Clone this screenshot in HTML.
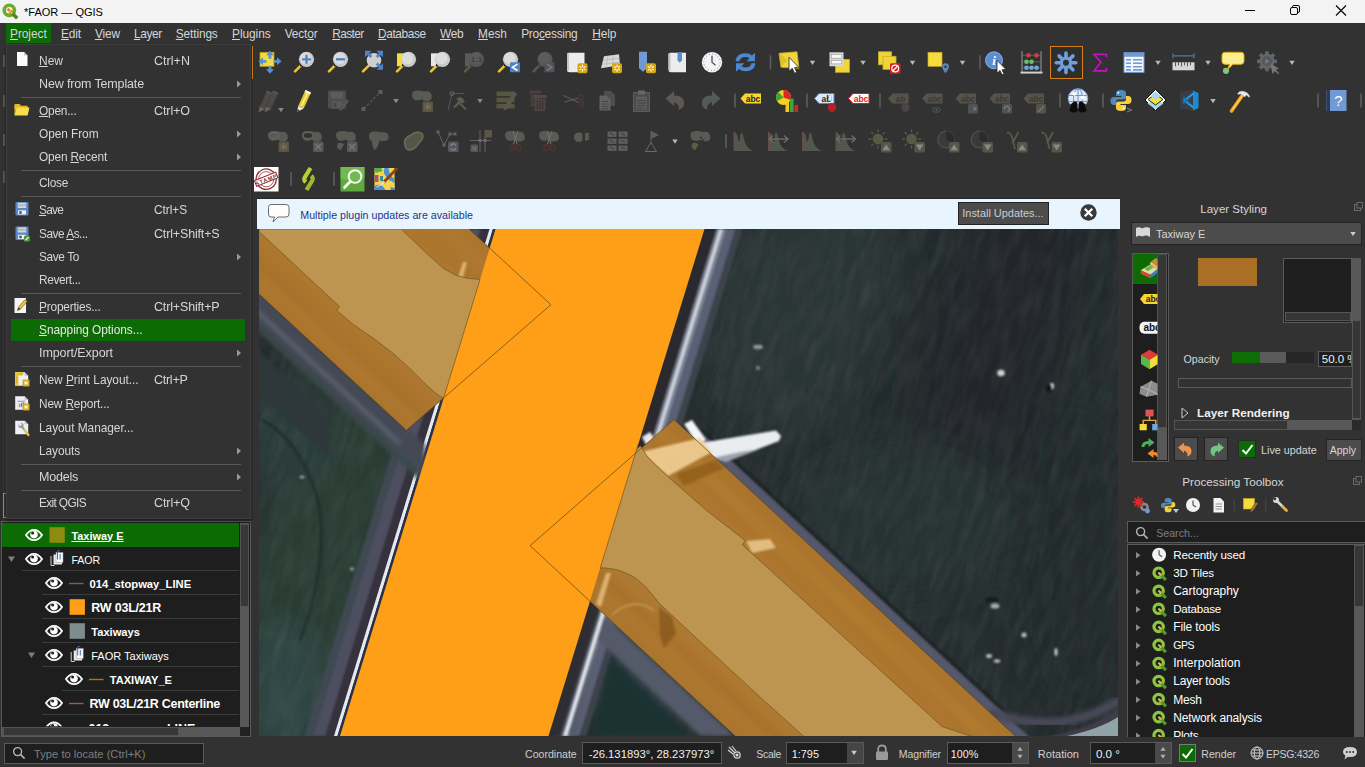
<!DOCTYPE html>
<html lang="en"><head><meta charset="utf-8"><title>*FAOR — QGIS</title>
<style>
html,body{margin:0;padding:0;}
body{width:1365px;height:767px;overflow:hidden;position:relative;background:#323232;font-family:"Liberation Sans",sans-serif;font-size:12px;}
.t{position:absolute;white-space:nowrap;display:block;}
.b{position:absolute;box-sizing:border-box;}
svg{position:absolute;overflow:visible;}
u{text-decoration:underline;text-underline-offset:1px;}
</style></head>
<body>
<!-- titlebar -->
<div class="b" style="left:0px;top:0px;width:1365px;height:23px;background:#f3f3f3;"></div>
<svg style="left:2px;top:3px" width="16" height="16" viewBox="0 0 16 16"><circle cx="7.3" cy="7.3" r="5.1" fill="none" stroke="#6cad2f" stroke-width="3.6"/><path d="M8 8 L15.2 15.2" stroke="#4d8a1c" stroke-width="3.4"/><path d="M6.2 6.4 L10.5 10.6" stroke="#f0b13a" stroke-width="2.6"/><path d="M5.6 5.8 L7.2 7.4" stroke="#ee7913" stroke-width="2.6"/></svg>
<span id="t1" class="t " style="left:24px;top:3.5px;font-size:11.02px;line-height:16px;color:#000;">*FAOR — QGIS</span>
<svg style="left:1240px;top:0" width="120" height="23" viewBox="1240 0 120 23" fill="none" stroke="#000" stroke-width="1"><path d="M1245 10.5 H1255"/><rect x="1290.5" y="7.5" width="7" height="7" rx="1.5"/><path d="M1292.5 7.5 V6.5 Q1292.5 5.5 1294 5.5 H1298 Q1299.5 5.5 1299.5 7 V11 Q1299.5 12.5 1298 12.5 H1297.5"/><path d="M1336 5.5 L1346 15.5 M1346 5.5 L1336 15.5" stroke-width="1.1"/></svg>
<div class="b" style="left:0px;top:23px;width:1365px;height:21px;background:#323232;"></div>
<div class="b" style="left:6px;top:23px;width:45px;height:20px;background:#0d6b05;"></div>
<span id="t2" class="t " style="left:10px;top:25.5px;font-size:11.88px;line-height:16px;color:#d6d6d6;letter-spacing:-0.039px;"><u>P</u>roject</span>
<span id="t3" class="t " style="left:61px;top:25.5px;font-size:11.88px;line-height:16px;color:#d6d6d6;letter-spacing:-0.117px;"><u>E</u>dit</span>
<span id="t4" class="t " style="left:94.9px;top:25.5px;font-size:11.88px;line-height:16px;color:#d6d6d6;letter-spacing:-0.112px;"><u>V</u>iew</span>
<span id="t5" class="t " style="left:133.9px;top:25.5px;font-size:11.88px;line-height:16px;color:#d6d6d6;letter-spacing:-0.343px;"><u>L</u>ayer</span>
<span id="t6" class="t " style="left:175.8px;top:25.5px;font-size:11.88px;line-height:16px;color:#d6d6d6;letter-spacing:-0.129px;"><u>S</u>ettings</span>
<span id="t7" class="t " style="left:232px;top:25.5px;font-size:11.88px;line-height:16px;color:#d6d6d6;letter-spacing:-0.038px;"><u>P</u>lugins</span>
<span id="t8" class="t " style="left:284.7px;top:25.5px;font-size:11.88px;line-height:16px;color:#d6d6d6;letter-spacing:-0.130px;">Vect<u>o</u>r</span>
<span id="t9" class="t " style="left:332.2px;top:25.5px;font-size:11.88px;line-height:16px;color:#d6d6d6;letter-spacing:-0.581px;"><u>R</u>aster</span>
<span id="t10" class="t " style="left:378px;top:25.5px;font-size:11.88px;line-height:16px;color:#d6d6d6;letter-spacing:-0.380px;"><u>D</u>atabase</span>
<span id="t11" class="t " style="left:440px;top:25.5px;font-size:11.88px;line-height:16px;color:#d6d6d6;letter-spacing:-0.303px;"><u>W</u>eb</span>
<span id="t12" class="t " style="left:478.1px;top:25.5px;font-size:11.88px;line-height:16px;color:#d6d6d6;letter-spacing:-0.087px;"><u>M</u>esh</span>
<span id="t13" class="t " style="left:521.2px;top:25.5px;font-size:11.88px;line-height:16px;color:#d6d6d6;letter-spacing:-0.255px;">Pro<u>c</u>essing</span>
<span id="t14" class="t " style="left:592.2px;top:25.5px;font-size:11.88px;line-height:16px;color:#d6d6d6;letter-spacing:-0.058px;"><u>H</u>elp</span>
<!-- toolbars -->
<svg style="left:0;top:0" width="1365" height="200" viewBox="0 0 1365 200"><g transform="translate(258,50.3)"><rect x="2" y="2" width="14" height="14" fill="#f5dc3c" stroke="#b99a1c" stroke-width=".8"/><g fill="#5b8fd1"><path d="M12 0.5 l4 4.5 h-2.6 v3.4 h-2.8 v-3.4 h-2.6z"/><path d="M12 23.5 l4 -4.5 h-2.6 v-3.4 h-2.8 v3.4 h-2.6z"/><path d="M0.5 11 l4.5 -4 v2.6 h3.4 v2.8 h-3.4 v2.6z"/><path d="M23.5 11 l-4.5 -4 v2.6 h-3.4 v2.8 h3.4 v2.6z"/></g></g><g transform="translate(292,50.3)"><path d="M3 21 L9.5 14.5" stroke="#e8c337" stroke-width="2.6" stroke-linecap="round"/><circle cx="9.3" cy="14.7" r="1.5" fill="#1d1d1d"/><circle cx="14.5" cy="9" r="7.6" fill="#c9c9c9"/><circle cx="13.6" cy="8" r="5.8" fill="#e4e4e4" opacity=".7"/><path d="M14.5 4.5 v9 M10 9 h9" stroke="#4f83c6" stroke-width="2.3"/></g><g transform="translate(326,50.3)"><path d="M3 21 L9.5 14.5" stroke="#e8c337" stroke-width="2.6" stroke-linecap="round"/><circle cx="9.3" cy="14.7" r="1.5" fill="#1d1d1d"/><circle cx="14.5" cy="9" r="7.6" fill="#c9c9c9"/><circle cx="13.6" cy="8" r="5.8" fill="#e4e4e4" opacity=".7"/><path d="M10 9 h9" stroke="#4f83c6" stroke-width="2.3"/></g><g transform="translate(360,50.3)"><path d="M3 21 L9 15" stroke="#e8c337" stroke-width="2.6" stroke-linecap="round"/><circle cx="14" cy="10" r="7.3" fill="#cfcfcf"/><g fill="#4f83c6"><path d="M5 0.5 h6.5 l-2.2 2.2 3 3 -2 2 -3 -3 -2.3 2.3z"/><path d="M23 0.5 v6.5 l-2.2 -2.2 -3 3 -2 -2 3 -3 -2.3 -2.3z"/><path d="M23 19.5 h-6.5 l2.2 -2.2 -3 -3 2 -2 3 3 2.3 -2.3z"/><path d="M5 19.5 v-6.5 l2.2 2.2 3 -3 2 2 -3 3 2.3 2.3z" opacity=".0"/></g></g><g transform="translate(394,50.3)"><rect x="3" y="3" width="9" height="13" fill="#f5dc3c"/><path d="M3 21 L9.5 14.5" stroke="#e8c337" stroke-width="2.6" stroke-linecap="round"/><circle cx="9.3" cy="14.7" r="1.5" fill="#1d1d1d"/><circle cx="14.5" cy="9" r="7.6" fill="#c9c9c9"/><circle cx="13.6" cy="8" r="5.8" fill="#e4e4e4" opacity=".7"/></g><g transform="translate(428,50.3)"><rect x="3" y="3" width="9" height="13" fill="#e6e6e6"/><path d="M3 21 L9.5 14.5" stroke="#e8c337" stroke-width="2.6" stroke-linecap="round"/><circle cx="9.3" cy="14.7" r="1.5" fill="#1d1d1d"/><circle cx="14.5" cy="9" r="7.6" fill="#c9c9c9"/><circle cx="13.6" cy="8" r="5.8" fill="#e4e4e4" opacity=".7"/></g><g transform="translate(462,50.3)"><rect x="3" y="3" width="9" height="13" fill="#5a5a5a"/><path d="M3 21 L9.5 14.5" stroke="#5d5a48" stroke-width="2.6" stroke-linecap="round"/><circle cx="9.3" cy="14.7" r="1.5" fill="#444"/><circle cx="14.5" cy="9" r="7.6" fill="#555"/><circle cx="13.6" cy="8" r="5.8" fill="#5f5f5f" opacity=".7"/><text x="14.5" y="12" font-size="8" font-weight="700" fill="#3c3c3c" text-anchor="middle" font-family="Liberation Sans,sans-serif">1:1</text></g><g transform="translate(496,50.3)"><path d="M3 21 L9.5 14.5" stroke="#e8c337" stroke-width="2.6" stroke-linecap="round"/><circle cx="9.3" cy="14.7" r="1.5" fill="#1d1d1d"/><circle cx="14.5" cy="9" r="7.6" fill="#c9c9c9"/><circle cx="13.6" cy="8" r="5.8" fill="#e4e4e4" opacity=".7"/><rect x="14" y="12" width="10" height="10" rx="1" fill="#4f83c6"/><path d="M21.5 13.8 l-5 3.2 5 3.2" stroke="#fff" stroke-width="1.6" fill="none"/></g><g transform="translate(530.5,50.3)"><path d="M3 21 L9.5 14.5" stroke="#5d5a48" stroke-width="2.6" stroke-linecap="round"/><circle cx="9.3" cy="14.7" r="1.5" fill="#444"/><circle cx="14.5" cy="9" r="7.6" fill="#555"/><circle cx="13.6" cy="8" r="5.8" fill="#5f5f5f" opacity=".7"/><rect x="14" y="12" width="10" height="10" rx="1" fill="#50545a"/><path d="M16.5 13.8 l5 3.2 -5 3.2" stroke="#777" stroke-width="1.6" fill="none"/></g><g transform="translate(564.5,50.3)"><path d="M4 2.5 H20 V22 H5 Q2.5 22 2.5 19.5 V4 Q2.5 2.5 4 2.5Z" fill="#ececec"/><path d="M2.5 4 Q2.5 2.5 4.5 2.5 V19.5 Q4.5 22 2.5 19.5Z" fill="#c4c4c4"/><rect x="13" y="13" width="10" height="10" rx="1.8" fill="#d4a514"/><g stroke="#fff" stroke-width="1.1"><path d="M18 14.5 v7 M15 16.2 l6 3.6 M21 16.2 l-6 3.6"/></g><circle cx="18" cy="18" r="1.3" fill="#d4a514"/></g><g transform="translate(599,50.3)"><path d="M5 6 L20 4 L21 15 L2 18Z" fill="#d9d9d9"/><path d="M9 5.5 L7 17.3 M14 4.8 L13.5 16.2 M4 10 L20.5 8 M3 14 L21 12" stroke="#b0b0b0" stroke-width=".7"/><rect x="13" y="13" width="10" height="10" rx="1.8" fill="#d4a514"/><g stroke="#fff" stroke-width="1.1"><path d="M18 14.5 v7 M15 16.2 l6 3.6 M21 16.2 l-6 3.6"/></g><circle cx="18" cy="18" r="1.3" fill="#d4a514"/></g><g transform="translate(634,50.3)"><path d="M5 1.5 H13 V18 L9 21.5 L5 18Z" fill="#6f9ad3"/><rect x="12" y="13" width="10" height="10" rx="1.8" fill="#d4a514"/><g stroke="#fff" stroke-width="1.1"><path d="M17 14.5 v7 M14 16.2 l6 3.6 M20 16.2 l-6 3.6"/></g><circle cx="17" cy="18" r="1.3" fill="#d4a514"/></g><g transform="translate(666,50.3)"><path d="M4 2.5 H20 V22 H5 Q2.5 22 2.5 19.5 V4 Q2.5 2.5 4 2.5Z" fill="#ececec"/><path d="M2.5 4 Q2.5 2.5 4.5 2.5 V19.5 Q4.5 22 2.5 19.5Z" fill="#c4c4c4"/><path d="M11.5 2 H16 V10 L13.75 12.5 L11.5 10Z" fill="#5d8ccb"/></g><g transform="translate(700,50.3)"><circle cx="12" cy="12" r="10.2" fill="#f4f4f4"/><circle cx="12" cy="12" r="8.2" fill="none" stroke="#5d8ccb" stroke-width="1" stroke-dasharray="1 2.2"/><path d="M12 5.5 V12 L15.5 15" stroke="#5a5a5a" stroke-width="1.4" fill="none"/></g><g transform="translate(733.5,50.3)"><g fill="#4c88d0"><path d="M2 11 Q3 3 12 3 Q16 3 18.5 5.2 L21.5 2.5 V11 H13.2 L16 8 Q14.2 6.6 12 6.7 Q6.8 6.8 6 11Z"/><path d="M22 13 Q21 21 12 21 Q8 21 5.5 18.8 L2.5 21.5 V13 H10.8 L8 16 Q9.8 17.4 12 17.3 Q17.2 17.2 18 13Z"/></g></g><rect x="769.7" y="55.3" width="1.6" height="14" fill="#5c5c5c"/><g transform="translate(777,50.3)"><path d="M2 3 L20 1.5 L22 18 L4 17Z" fill="#f0d53a" stroke="#c9ad22" stroke-width=".8"/><path d="M3 3 L10 10 L4 16.5" fill="#dcc02c"/><path d="M12 7 L12 21 L15.3 18 L17.6 23 L19.8 22 L17.5 17.2 L21.8 17Z" fill="#fff" stroke="#222" stroke-width=".8"/></g><path d="M809.8 60.8 h5.4 l-2.7 4.2z" fill="#b8b8b8"/><g transform="translate(827.5,50.3)"><rect x="8" y="9" width="14" height="13" fill="#f0d53a" stroke="#c9ad22" stroke-width=".7"/><rect x="2" y="2" width="14" height="14" fill="#d7d7d7"/><rect x="3.8" y="4.2" width="10.4" height="3.6" fill="#fafafa" stroke="#8a8a8a" stroke-width=".5"/><rect x="3.8" y="10" width="10.4" height="3.6" fill="#fafafa" stroke="#8a8a8a" stroke-width=".5"/></g><path d="M860.3 60.8 h5.4 l-2.7 4.2z" fill="#b8b8b8"/><g transform="translate(877,50.3)"><rect x="1.5" y="1.5" width="13" height="13" fill="#f0d53a" stroke="#c9ad22" stroke-width=".8"/><rect x="6" y="6" width="13" height="13" fill="#f0d53a" stroke="#c9ad22" stroke-width=".8"/><rect x="13" y="13" width="10.5" height="10.5" rx="1.5" fill="#d42020"/><circle cx="18.2" cy="18.2" r="3.4" fill="none" stroke="#fff" stroke-width="1.3"/><path d="M16 20.5 L20.5 16" stroke="#fff" stroke-width="1.3"/></g><path d="M909.8 60.8 h5.4 l-2.7 4.2z" fill="#b8b8b8"/><g transform="translate(925.5,50.3)"><rect x="2.5" y="2" width="14" height="14" fill="#f5dc3c" stroke="#c9ad22" stroke-width=".7"/><path d="M20 23 Q16.6 18.5 16.6 16.4 A3.4 3.4 0 0 1 23.4 16.4 Q23.4 18.5 20 23Z" fill="#5c86b8"/><circle cx="20" cy="16.4" r="1.2" fill="#323232"/></g><path d="M959.8 60.8 h5.4 l-2.7 4.2z" fill="#b8b8b8"/><rect x="979.2" y="55.3" width="1.6" height="14" fill="#5c5c5c"/><g transform="translate(984,50.3)"><circle cx="10" cy="10" r="8.5" fill="#5b8fd1"/><circle cx="10" cy="10" r="8.5" fill="none" stroke="#86aee0" stroke-width="1"/><text x="10" y="15" font-size="13" font-weight="700" font-style="italic" fill="#fff" text-anchor="middle" font-family="Liberation Serif,serif">i</text><path d="M13 10 L13 23 L16 20.3 L18 24.5 L20 23.6 L18 19.5 L22 19.2Z" fill="#fff" stroke="#222" stroke-width=".8"/></g><g transform="translate(1019.5,50.3)"><path d="M2.5 1 V22 M21.5 1 V22" stroke="#8a8a8a" stroke-width="1.2"/><path d="M1 22.3 H23" stroke="#cfcfcf" stroke-width="2"/><path d="M3 5 H21 M3 11.5 H21 M3 17.5 H21" stroke="#777" stroke-width=".6"/><g fill="#d83a3a"><circle cx="9" cy="5" r="2.3"/><circle cx="17" cy="5" r="2.3"/></g><g fill="#6cc06a"><circle cx="7" cy="11.5" r="2.3"/><circle cx="12" cy="11.5" r="2.3"/></g><g fill="#6aa7dc"><circle cx="7" cy="17.5" r="2.3"/><circle cx="12" cy="17.5" r="2.3"/><circle cx="17" cy="17.5" r="2.3"/></g></g><rect x="1050.5" y="46.5" width="32" height="32" fill="#2e2e2e" stroke="#d7801a" stroke-width="1"/><g transform="translate(1054,50.8)"><path d="M12 12 L12 2.2" stroke="#6f9fdc" stroke-width="3.6" stroke-linecap="round" transform="rotate(0 12 12)"/><path d="M12 12 L12 2.2" stroke="#6f9fdc" stroke-width="3.6" stroke-linecap="round" transform="rotate(45 12 12)"/><path d="M12 12 L12 2.2" stroke="#6f9fdc" stroke-width="3.6" stroke-linecap="round" transform="rotate(90 12 12)"/><path d="M12 12 L12 2.2" stroke="#6f9fdc" stroke-width="3.6" stroke-linecap="round" transform="rotate(135 12 12)"/><path d="M12 12 L12 2.2" stroke="#6f9fdc" stroke-width="3.6" stroke-linecap="round" transform="rotate(180 12 12)"/><path d="M12 12 L12 2.2" stroke="#6f9fdc" stroke-width="3.6" stroke-linecap="round" transform="rotate(225 12 12)"/><path d="M12 12 L12 2.2" stroke="#6f9fdc" stroke-width="3.6" stroke-linecap="round" transform="rotate(270 12 12)"/><path d="M12 12 L12 2.2" stroke="#6f9fdc" stroke-width="3.6" stroke-linecap="round" transform="rotate(315 12 12)"/><circle cx="12" cy="12" r="6.2" fill="#6f9fdc"/><circle cx="12" cy="12" r="3" fill="#2e2e2e"/></g><g transform="translate(1088,50.3)"><path d="M18.5 7 V4 H6 L13 12 L6 20.5 H18.5 V17.5" fill="none" stroke="#c013c0" stroke-width="1.7"/></g><g transform="translate(1122,50.3)"><rect x="2" y="2.5" width="20" height="19.5" fill="#f2f6fc" stroke="#6f9ad3" stroke-width="1"/><rect x="2" y="2.5" width="20" height="4" fill="#6f9ad3"/><g stroke="#6f9ad3" stroke-width="1.6"><path d="M4 9.5 h5 M11 9.5 h9 M4 13 h5 M11 13 h9 M4 16.5 h5 M11 16.5 h9 M4 19.6 h5 M11 19.6 h9"/></g></g><path d="M1155.3 60.8 h5.4 l-2.7 4.2z" fill="#b8b8b8"/><g transform="translate(1171.5,50.3)"><path d="M1.5 5.5 H22.5 M1.5 3 V8 M22.5 3 V8" stroke="#4a78b8" stroke-width="1.2"/><rect x="1" y="12" width="22" height="8" fill="#d6d6d6"/><path d="M4 12 v4 M7 12 v3 M10 12 v4 M13 12 v3 M16 12 v4 M19 12 v3" stroke="#555" stroke-width="1"/></g><path d="M1205.3 60.8 h5.4 l-2.7 4.2z" fill="#b8b8b8"/><g transform="translate(1221,50.3)"><circle cx="5" cy="20.5" r="3.1" fill="#7fc47f"/><path d="M4 2 H20 Q23 2 23 5 V11 Q23 14 20 14 H12 L6.5 19.5 L8.5 14 H4 Q1 14 1 11 V5 Q1 2 4 2Z" fill="#fbee8e" stroke="#d9a91a" stroke-width="1"/></g><g transform="translate(1255,50.3)"><rect x="10.2" y="1" width="3.6" height="4" fill="#666" transform="rotate(0 12 11)"/><rect x="10.2" y="1" width="3.6" height="4" fill="#666" transform="rotate(45 12 11)"/><rect x="10.2" y="1" width="3.6" height="4" fill="#666" transform="rotate(90 12 11)"/><rect x="10.2" y="1" width="3.6" height="4" fill="#666" transform="rotate(135 12 11)"/><rect x="10.2" y="1" width="3.6" height="4" fill="#666" transform="rotate(180 12 11)"/><rect x="10.2" y="1" width="3.6" height="4" fill="#666" transform="rotate(225 12 11)"/><rect x="10.2" y="1" width="3.6" height="4" fill="#666" transform="rotate(270 12 11)"/><rect x="10.2" y="1" width="3.6" height="4" fill="#666" transform="rotate(315 12 11)"/><circle cx="12" cy="11" r="7.6" fill="#666"/><circle cx="12" cy="11" r="5" fill="#505860"/><path d="M10.3 8.2 L15 11 L10.3 13.8Z" fill="#777"/><path d="M15.5 14 L17.5 24 L19.6 20.6 L23.5 24 L24 23 L20.8 19.3 L24 18Z" fill="#777"/></g><path d="M1289.3 60.8 h5.4 l-2.7 4.2z" fill="#b8b8b8"/><g transform="translate(257,88.5)"><g transform="translate(-3.5,.5)"><path d="M6.2 17.5 L13.5 1.5 L19 4 L11.7 20Z" fill="#4a4643"/><path d="M9.6 17.2 L16.3 2.9" stroke="#514d49" stroke-width="1.4"/><path d="M6.2 17.5 L11.7 20 L5 23.5Z" fill="#656565"/><path d="M13.5 1.5 L19 4 L18.1 6 L12.6 3.5Z" fill="#555"/></g><g transform="translate(2.5,.5)"><path d="M6.2 17.5 L13.5 1.5 L19 4 L11.7 20Z" fill="#4a4643"/><path d="M9.6 17.2 L16.3 2.9" stroke="#514d49" stroke-width="1.4"/><path d="M6.2 17.5 L11.7 20 L5 23.5Z" fill="#656565"/><path d="M13.5 1.5 L19 4 L18.1 6 L12.6 3.5Z" fill="#555"/></g></g><path d="M278.3 108 h5.4 l-2.7 4.2z" fill="#8a8a8a"/><g transform="translate(292,88.5)"><path d="M6.2 17.5 L13.5 1.5 L19 4 L11.7 20Z" fill="#e6cb2e"/><path d="M9.6 17.2 L16.3 2.9" stroke="#fdf39a" stroke-width="1.4"/><path d="M6.2 17.5 L11.7 20 L5 23.5Z" fill="#e9e9e9"/><path d="M13.5 1.5 L19 4 L18.1 6 L12.6 3.5Z" fill="#f4f4f4"/><path d="M5 23.5 L5.7 20.6 L7.7 21.9Z" fill="#333"/></g><g transform="translate(326,88.5)"><rect x="2" y="2" width="18" height="18" rx="1" fill="#4e4e4e"/><rect x="5" y="3.5" width="12" height="6.5" fill="#5c5c5c"/><rect x="6" y="13" width="10" height="7" fill="#5a5a5a"/><rect x="7.5" y="14.5" width="3" height="4" fill="#444"/><path d="M13 22.5 L14 18.5 L20 10.5 L23 12.8 L17 20.8Z" fill="#59544e"/></g><g transform="translate(360,88.5)"><path d="M4 20 L20 4" stroke="#5d5d5d" stroke-width="1.1" stroke-dasharray="2.5 2"/><rect x="1.5" y="18.5" width="4" height="4" fill="#5d5d5d"/><rect x="18.5" y="1.5" width="4" height="4" fill="#5d5d5d"/></g><path d="M393.3 99 h5.4 l-2.7 4.2z" fill="#8a8a8a"/><g transform="translate(410,88.5)"><path d="M2 6 Q2 2 8 2 Q12 2 14 3 Q20 1.5 21.5 6 Q23 12 17.5 12.5 Q13 12.5 12 10.5 Q9 12.5 5 11.5 Q2 10 2 6Z" fill="#5a5a55"/><rect x="12.5" y="13" width="10.5" height="10.5" rx="1.5" fill="#5b5743"/><g stroke="#7a7766" stroke-width="1"><path d="M17.7 14.5 v7.5 M14.5 16.4 l6.5 3.7 M21 16.4 l-6.5 3.7"/></g></g><g transform="translate(445,88.5)"><path d="M3 22 L7 5 H19" stroke="#5a5a5a" stroke-width=".9" fill="none"/><circle cx="7" cy="5" r="2" fill="none" stroke="#6a6a6a" stroke-width="1"/><path d="M9 19 L18 10" stroke="#5d5a4a" stroke-width="2.4"/><path d="M11 10.5 L15 8 L20 13 L17.5 15Z" fill="#5a5a5a"/><path d="M13 13 L21 21" stroke="#5d5a4a" stroke-width="2.2"/></g><path d="M477.3 99 h5.4 l-2.7 4.2z" fill="#8a8a8a"/><g transform="translate(494.5,88.5)"><rect x="2" y="3" width="18" height="4.6" fill="#57573f"/><rect x="2" y="9.2" width="18" height="4.6" fill="#57573f"/><rect x="2" y="15.4" width="18" height="4.6" fill="#57573f"/><path d="M9 22.5 L10.2 17.5 L19 3 L22.5 5.2 L14 19.6Z" fill="#5b5651"/></g><g transform="translate(527.5,88.5)"><rect x="2" y="2" width="12" height="3" fill="#4a403f"/><rect x="3" y="6" width="10" height="12" fill="#463d3c"/><rect x="6" y="6.5" width="13" height="3" fill="#544847"/><rect x="7" y="10.5" width="11" height="12" fill="#4f4443"/><path d="M10 12 v9 M12.7 12 v9 M15.4 12 v9" stroke="#3a3232" stroke-width="1.2"/></g><g transform="translate(561.5,88.5)"><path d="M2 7 L17 14 M3 13.5 L17 9.5" stroke="#5b5b5b" stroke-width="1.3"/><circle cx="19.5" cy="9" r="2.6" fill="none" stroke="#5e3434" stroke-width="1"/><circle cx="19.5" cy="15.5" r="2.6" fill="none" stroke="#5e3434" stroke-width="1"/></g><g transform="translate(596,88.5)"><path d="M8 2.5 h7 l4 4 v11 h-11z" fill="#4d4d4d"/><path d="M3.5 7 h7 l4 4 v11 h-11z" fill="#626262"/><path d="M5.5 13 h7 M5.5 15.5 h7 M5.5 18 h7 M5.5 20.3 h7" stroke="#444" stroke-width=".9"/></g><g transform="translate(630,88.5)"><rect x="3.5" y="4" width="16" height="19" fill="#4b4b4b" stroke="#5e5e5e" stroke-width="1"/><rect x="8" y="2" width="7" height="4" fill="#666"/><rect x="6" y="8" width="11" height="13" fill="#5c5c5c"/><path d="M7.5 12 h8 M7.5 14.5 h8 M7.5 17 h8 M7.5 19.3 h6" stroke="#444" stroke-width=".9"/></g><g transform="translate(664,88.5)"><path d="M1.5 10 L10 2.5 V7 Q21 7 20 16 Q19.5 20 14 21.5 Q17 17 10 13.5 V17.5Z" fill="#5c5853"/></g><g transform="translate(698,88.5)"><path d="M22.5 10 L14 2.5 V7 Q3 7 4 16 Q4.5 20 10 21.5 Q7 17 14 13.5 V17.5Z" fill="#535a57"/></g><rect x="734.2" y="93.5" width="1.6" height="14" fill="#5c5c5c"/><g transform="translate(740,89.5)"><path d="M0.5 9 L5 4 H21 V14 H5Z" fill="#f5d730"/><text x="13" y="12.4" font-size="8.5" font-weight="700" fill="#222" text-anchor="middle" font-family="Liberation Sans,sans-serif">abc</text></g><g transform="translate(775,88.5)"><circle cx="8.5" cy="9" r="7.5" fill="#f5d21f"/><path d="M8.5 9 L8.5 1.5 A7.5 7.5 0 0 1 15.6 11.4Z" fill="#e0262a"/><path d="M8.5 9 L2 12.8 A7.5 7.5 0 0 1 3.5 3.5Z" fill="#3ea53c"/><rect x="10.5" y="14" width="3.6" height="9.5" fill="#f5c81f"/><rect x="15" y="10" width="3.6" height="13.5" fill="#3ea53c"/><rect x="19.5" y="16.5" width="3.6" height="7" fill="#d7262a"/></g><rect x="806.2" y="93.5" width="1.6" height="14" fill="#5c5c5c"/><g transform="translate(814,89.5)"><path d="M0.5 9 L5 4 H20 V14 H5Z" fill="#dbe9fb" stroke="#4f83c6" stroke-width="1"/><text x="12.5" y="12.4" font-size="8.5" font-weight="700" fill="#222" text-anchor="middle" font-family="Liberation Sans,sans-serif">ab</text><rect x="15" y="5.5" width="2.2" height="6" rx="1" fill="#fff" stroke="#777" stroke-width=".4"/><circle cx="18" cy="18" r="4.4" fill="#b32027"/></g><g transform="translate(848,89.5)"><path d="M0.5 9 L5 4 H21 V14 H5Z" fill="#fff" stroke="#e0161c" stroke-width="1"/><text x="13" y="12.4" font-size="8.5" font-weight="700" fill="#e0161c" text-anchor="middle" font-family="Liberation Sans,sans-serif">abc</text></g><rect x="879.2" y="93.5" width="1.6" height="14" fill="#5c5c5c"/><g transform="translate(887.5,89.5)"><path d="M0.5 9 L5 4 H21 V14 H5Z" fill="#56534a"/><text x="13" y="12.4" font-size="8.5" font-weight="700" fill="#3b3a36" text-anchor="middle" font-family="Liberation Sans,sans-serif">ab</text><circle cx="18" cy="18" r="4.2" fill="#4d4446"/></g><g transform="translate(921.5,89.5)"><path d="M0.5 9 L5 4 H21 V14 H5Z" fill="#56534a"/><text x="13" y="12.4" font-size="8.5" font-weight="700" fill="#3b3a36" text-anchor="middle" font-family="Liberation Sans,sans-serif">abc</text><ellipse cx="15" cy="20.5" rx="4" ry="2.3" fill="none" stroke="#55575f" stroke-width="1"/><circle cx="15" cy="20.5" r="1.2" fill="#55575f"/></g><g transform="translate(955,89.5)"><path d="M0.5 9 L5 4 H21 V14 H5Z" fill="#56534a"/><text x="13" y="12.4" font-size="8.5" font-weight="700" fill="#3b3a36" text-anchor="middle" font-family="Liberation Sans,sans-serif">abc</text><rect x="13" y="14.5" width="10" height="9.5" rx="1.5" fill="#4f5257"/><path d="M14.5 19.2 h4 v-2.7 l3.6 2.7 -3.6 2.7 v-2.7z" fill="#73767a"/></g><g transform="translate(989,89.5)"><path d="M0.5 9 L5 4 H21 V14 H5Z" fill="#56534a"/><text x="13" y="12.4" font-size="8.5" font-weight="700" fill="#3b3a36" text-anchor="middle" font-family="Liberation Sans,sans-serif">abc</text><rect x="13" y="14.5" width="10" height="9.5" rx="1.5" fill="#4f5257"/><path d="M15.5 20 A2.6 2.6 0 1 1 18.6 22" stroke="#777a7e" stroke-width="1.2" fill="none"/></g><g transform="translate(1023,89.5)"><path d="M0.5 9 L5 4 H21 V14 H5Z" fill="#56534a"/><text x="13" y="12.4" font-size="8.5" font-weight="700" fill="#3b3a36" text-anchor="middle" font-family="Liberation Sans,sans-serif">abc</text><rect x="13" y="14.5" width="10" height="9.5" rx="1.5" fill="#55534a"/><path d="M15 22.5 L21 16.5" stroke="#77756b" stroke-width="1.6"/></g><rect x="1059.2" y="93.5" width="1.6" height="14" fill="#5c5c5c"/><g transform="translate(1066,88.5)"><circle cx="12" cy="10" r="9.8" fill="#dfe9f7" stroke="#7fa6d8" stroke-width="1"/><g fill="none" stroke="#5d8ccb" stroke-width=".9"><ellipse cx="12" cy="10" rx="4.5" ry="9.6"/><path d="M2.5 7 H21.5 M2.5 13 H21.5 M12 .5 V19.5"/></g><path d="M6 5 l3 -1.5 2 2 -3 2z M14 8 l4 -1 1 3 -3 1z" fill="#fff"/><g fill="#0c0c0c"><path d="M4.5 16 L8 13 H10.5 L11.5 16 V22 H4.5Z"/><path d="M19.5 16 L16 13 H13.5 L12.5 16 V22 H19.5Z"/><ellipse cx="7.5" cy="21.5" rx="4" ry="2.4"/><ellipse cx="16.5" cy="21.5" rx="4" ry="2.4"/></g></g><rect x="1102.2" y="93.5" width="1.6" height="14" fill="#5c5c5c"/><g transform="translate(1109,88.5)"><path d="M11.8 1.5 Q7 1.5 7 4.5 V7.5 H12.5 V8.5 H5 Q1.5 8.5 1.5 12.5 Q1.5 16.5 5 16.5 H7 V13.5 Q7 11 10 11 H14.5 Q17 11 17 8.5 V4.5 Q17 1.5 11.8 1.5Z" fill="#4b8bbe"/><path d="M12.2 22.5 Q17 22.5 17 19.5 V16.5 H11.5 V15.5 H19 Q22.5 15.5 22.5 11.5 Q22.5 7.5 19 7.5 H17 V10.5 Q17 13 14 13 H9.5 Q7 13 7 15.5 V19.5 Q7 22.5 12.2 22.5Z" fill="#f6cf3f"/><circle cx="9.3" cy="4.3" r="1" fill="#fff"/><circle cx="14.7" cy="19.7" r="1" fill="#fff"/><path d="M18 19.5 L22.5 21.5 L18 23.5" fill="none" stroke="#777" stroke-width="1.2"/></g><g transform="translate(1143.5,88.5)"><path d="M12 1 L22.5 11.5 L12 22 L1.5 11.5Z" fill="#fff" stroke="#111" stroke-width="1"/><path d="M12 10 L20 15 L12 21 L4 15Z" fill="#a9d7ef"/><path d="M12 5.5 L19.5 11 L12 16.5 L4.5 11Z" fill="#f3e03c" stroke="#111" stroke-width=".9"/><path d="M12 2.8 L17.2 7.5 L12 11.2 L6.8 7.5Z" fill="#a9d7ef"/></g><g transform="translate(1177,88.5)"><path d="M3 3 L17 1.5 V22.5 L3 20Z" fill="#3a3d44"/><path d="M16 2 L21.5 4.5 V19.5 L16 22Z" fill="#1f8ad2"/><path d="M16 2 L6 11 L3.8 9.3 L2.5 10 L16 22 V17 L9.5 12 L16 7Z" fill="#2d9cdf" opacity=".0"/><path d="M16.5 5 L7.5 12 L16.5 19" fill="none" stroke="#2d9cdf" stroke-width="2.2"/><path d="M6 9 L13 15 M6 15 L13 9" stroke="#1473b5" stroke-width="1.8"/></g><path d="M1210.3 99 h5.4 l-2.7 4.2z" fill="#b8b8b8"/><g transform="translate(1227,88.5)"><path d="M4.5 22.5 L16 6" stroke="#f0a81c" stroke-width="3.6" stroke-linecap="round"/><path d="M5.5 21 L16 6" stroke="#ffd36a" stroke-width="1.1"/><path d="M10.5 5 Q14 .5 20.5 4.5 L23 8 L21.8 8.8 L19.5 6.6 L17.8 8.6 L13.8 5.6 Q12 5.5 11.2 6Z" fill="#e9e9e9" stroke="#9a9a9a" stroke-width=".5"/></g><rect x="1317.2" y="93.5" width="1.6" height="14" fill="#5c5c5c"/><g transform="translate(1324.5,88.5)"><rect x="2" y="1.5" width="20" height="21" fill="#6f9ad3"/><rect x="2" y="1.5" width="3.5" height="21" fill="#2e3a55"/><text x="13.8" y="17.5" font-size="15" fill="#fff" text-anchor="middle" font-family="Liberation Sans,sans-serif">?</text></g><rect x="1360.2" y="93.5" width="1.6" height="14" fill="#5c5c5c"/><g transform="translate(266,129)"><path d="M2 6 Q2 2 8 2 Q12 2 14 3 Q20 1.5 21.5 6 Q23 12 17.5 12.5 Q13 12.5 12 10.5 Q9 12.5 5 11.5 Q2 10 2 6Z" fill="#5a5a55"/><ellipse cx="8" cy="6.5" rx="4.6" ry="3" fill="none" stroke="#6c6c6c" stroke-width=".8"/><rect x="12.5" y="12.5" width="10.5" height="10.5" rx="1.5" fill="#5b5743"/><g stroke="#7a7766" stroke-width="1"><path d="M17.7 14 v7.5 M14.5 15.9 l6.5 3.7 M21 15.9 l-6.5 3.7"/></g></g><g transform="translate(300,129)"><path d="M2 6 Q2 2 8 2 Q12 2 14 3 Q20 1.5 21.5 6 Q23 12 17.5 12.5 Q13 12.5 12 10.5 Q9 12.5 5 11.5 Q2 10 2 6Z" fill="#5a5a55"/><ellipse cx="8" cy="6.5" rx="4.6" ry="3" fill="#323232" stroke="#6c6c6c" stroke-width=".8"/><rect x="13" y="12.5" width="10.5" height="10.5" rx="1.5" fill="#585858"/><path d="M15.5 15 l5.5 5.5 M21 15 l-5.5 5.5" stroke="#787878" stroke-width="1.4"/></g><g transform="translate(334,129)"><path d="M2 6 Q2 2 8 2 Q12 2 14 3 Q20 1.5 21.5 6 Q23 12 17.5 12.5 Q13 12.5 12 10.5 Q9 12.5 5 11.5 Q2 10 2 6Z" fill="#5a5a55"/><path d="M4 14 Q8 13 10 15.5 L7 21 Q3 20 3 17Z" fill="#5a5a55"/><rect x="13" y="12.5" width="10.5" height="10.5" rx="1.5" fill="#585858"/><path d="M15.5 15 l5.5 5.5 M21 15 l-5.5 5.5" stroke="#787878" stroke-width="1.4"/></g><g transform="translate(367,129)"><path d="M2 7 Q2 2.5 8 2.5 Q12 2.5 14 3.5 Q20 2 21.5 6.5 Q22.5 11 18 12 Q14 12 12.5 11.5 Q11 18 8.5 21 Q5.5 21 5 12.5 Q2 11 2 7Z" fill="#5a5a55"/></g><g transform="translate(401,129)"><path d="M4 16 Q2 9 10 6 Q16 1 21 4.5 Q23.5 9 18 14 Q13 21.5 7.5 21 Q4.5 20 4 16Z" fill="#555648" stroke="#6a6a55" stroke-width="1.6"/></g><g transform="translate(435,129)"><path d="M3 3 L9 16 L15 5 H20" fill="none" stroke="#626262" stroke-width="1"/><g fill="#626262"><rect x="1.5" y="1.5" width="3" height="3"/><rect x="7.5" y="14.5" width="3" height="3"/><rect x="13.5" y="3.5" width="3" height="3"/><rect x="18.5" y="3.5" width="3" height="3"/></g><rect x="13" y="12.5" width="10.5" height="10.5" rx="1.5" fill="#55585c"/><path d="M15.5 17 A3 3 0 0 1 21 16.5 M21 19 A3 3 0 0 1 15.5 19.5" stroke="#85888c" stroke-width="1.2" fill="none"/></g><g transform="translate(469,129)"><path d="M1 11.5 H22 M11 1 V23 M16 8 V23" stroke="#626262" stroke-width="1"/><rect x="15.5" y="1" width="7.5" height="7.5" rx="1" fill="#5b5743"/><rect x="1.5" y="15.5" width="7.5" height="7.5" rx="1" fill="#585858"/><path d="M3.3 17.3 l4 4 M7.3 17.3 l-4 4" stroke="#7a7a7a" stroke-width="1"/><rect x="9.5" y="10" width="3" height="3" fill="#6a6a6a"/><rect x="14.5" y="10" width="3" height="3" fill="#6a6a6a"/></g><g transform="translate(503,129)"><path d="M2 6 Q2 2 8 2 Q12 2 14 3 Q20 1.5 21.5 6 Q23 12 17.5 12.5 Q13 12.5 12 10.5 Q9 12.5 5 11.5 Q2 10 2 6Z" fill="#5a5a55"/><path d="M10 2 L14 15 M15 2 L10.5 15" stroke="#6e6e6e" stroke-width="1.1"/><ellipse cx="9" cy="18.5" rx="2.2" ry="3.2" fill="none" stroke="#5e3434" stroke-width="1"/><ellipse cx="15.5" cy="18.5" rx="2.2" ry="3.2" fill="none" stroke="#5e3434" stroke-width="1"/></g><g transform="translate(537,129)"><path d="M2 6 Q2 2 8 2 Q12 2 14 3 Q20 1.5 21.5 6 Q23 12 17.5 12.5 Q13 12.5 12 10.5 Q9 12.5 5 11.5 Q2 10 2 6Z" fill="#5a5a55"/><path d="M10 2 L14 15 M15 2 L10.5 15" stroke="#6e6e6e" stroke-width="1.1"/><ellipse cx="9" cy="18.5" rx="2.2" ry="3.2" fill="none" stroke="#5e3434" stroke-width="1"/><ellipse cx="15.5" cy="18.5" rx="2.2" ry="3.2" fill="none" stroke="#5e3434" stroke-width="1"/></g><g transform="translate(571,129)"><path d="M3 8 Q3 3.5 8 3.5 Q11.5 3.5 11.5 6.5 V10 Q11.5 13 8 13 Q3 13 3 8Z" fill="#5a5a55"/><path d="M14 4 q3 -1 5 1 l-2 1 2 1.2 -2 1.2 2 1.2 -2 1.2 q-2 1.5 -3 1z" fill="#5a5a55"/></g><g transform="translate(605.5,129)"><rect x="2" y="2.5" width="9" height="5.4" fill="#5e5e5e"/><path d="M4.5 4 l4 2.4" stroke="#3a3a3a" stroke-width="1"/><rect x="2" y="9.5" width="9" height="5.4" fill="#5e5e5e"/><path d="M4.5 11 l4 2.4" stroke="#3a3a3a" stroke-width="1"/><rect x="2" y="16.5" width="9" height="5.4" fill="#5e5e5e"/><path d="M4.5 18 l4 2.4" stroke="#3a3a3a" stroke-width="1"/><rect x="13" y="2.5" width="9" height="5.4" fill="#5e5e5e"/><path d="M15.5 4 l4 2.4" stroke="#3a3a3a" stroke-width="1"/><rect x="13" y="9.5" width="9" height="5.4" fill="#5e5e5e"/><path d="M15.5 11 l4 2.4" stroke="#3a3a3a" stroke-width="1"/><rect x="13" y="16.5" width="9" height="5.4" fill="#5e5e5e"/><path d="M15.5 18 l4 2.4" stroke="#3a3a3a" stroke-width="1"/></g><g transform="translate(640,129)"><path d="M11 2 V14" stroke="#5e5e5e" stroke-width="1"/><path d="M11 2 L19 6 L11 10Z" fill="#5e5e5e"/><path d="M11 13.5 L16.5 22.5 H5.5Z" fill="none" stroke="#6a6a6a" stroke-width="1"/></g><path d="M672.3 139.5 h5.4 l-2.7 4.2z" fill="#b8b8b8"/><g transform="translate(688.5,129)"><path d="M2 6 Q2 2 8 2 Q12 2 14 3 Q20 1.5 21.5 6 Q23 12 17.5 12.5 Q13 12.5 12 10.5 Q9 12.5 5 11.5 Q2 10 2 6Z" fill="#5a5a55"/><path d="M4 14 Q8 13 10 15.5 L7 21 Q3 20 3 17Z" fill="#5d5a4a"/><path d="M12 8 L21 19" stroke="#2e2e2e" stroke-width="1.6" stroke-dasharray="2 1.4"/></g><rect x="725.2" y="134" width="1.6" height="14" fill="#5c5c5c"/><g transform="translate(732,129)"><path d="M2 22 V3 Q5 3 6 10 Q7 17 9 4 Q10.5 2 12 10 Q14 20 22 22Z" fill="#545650"/><path d="M2 22 V3" stroke="#6b4a4a" stroke-width="1"/><path d="M9 22 V5" stroke="#4d5a4d" stroke-width="1"/></g><g transform="translate(766.5,129)"><path d="M2 22 V3 Q5 3 6 10 Q7 17 9 4 Q10.5 2 12 10 Q14 20 22 22Z" fill="#545650"/><path d="M2 22 V3" stroke="#6b4a4a" stroke-width="1"/><path d="M9 22 V5" stroke="#4d5a4d" stroke-width="1"/><path d="M3 10 h18 M6.5 6.5 L2.5 10 l4 3.5 M17.5 6.5 L21.5 10 l-4 3.5" stroke="#6a6a66" stroke-width="1.5" fill="none"/></g><g transform="translate(800.5,129)"><path d="M2 22 V3 Q5 3 6 10 Q7 17 9 4 Q10.5 2 12 10 Q14 20 22 22Z" fill="#545650"/><path d="M2 22 V3" stroke="#6b4a4a" stroke-width="1"/><path d="M9 22 V5" stroke="#4d5a4d" stroke-width="1"/></g><g transform="translate(834,129)"><path d="M2 22 V3 Q5 3 6 10 Q7 17 9 4 Q10.5 2 12 10 Q14 20 22 22Z" fill="#545650"/><path d="M2 22 V3" stroke="#6b4a4a" stroke-width="1"/><path d="M9 22 V5" stroke="#4d5a4d" stroke-width="1"/><path d="M3 10 h18 M6.5 6.5 L2.5 10 l4 3.5 M17.5 6.5 L21.5 10 l-4 3.5" stroke="#6a6a66" stroke-width="1.5" fill="none"/></g><g transform="translate(868,129)"><circle cx="10" cy="10" r="5.3" fill="#5b5844"/><path d="M10 .5 v3 M10 16.5 v3 M.5 10 h3 M16.5 10 h3 M3.3 3.3 l2 2 M16.7 3.3 l-2 2 M3.3 16.7 l2 -2" stroke="#5b5844" stroke-width="1.4"/><rect x="13" y="13" width="10.5" height="10.5" rx="1.5" fill="#54564c"/><path d="M18.2 15.2 l3.8 6 h-7.6z" fill="#8a8a84"/></g><g transform="translate(901.5,129)"><circle cx="10" cy="10" r="5.3" fill="#5b5844"/><path d="M10 .5 v3 M10 16.5 v3 M.5 10 h3 M16.5 10 h3 M3.3 3.3 l2 2 M16.7 3.3 l-2 2 M3.3 16.7 l2 -2" stroke="#5b5844" stroke-width="1.4"/><rect x="13" y="13" width="10.5" height="10.5" rx="1.5" fill="#54564c"/><path d="M18.2 21.5 l3.8 -6 h-7.6z" fill="#8a8a84"/></g><g transform="translate(936,129)"><circle cx="10" cy="10.5" r="8.3" fill="#3a3a3a" stroke="#505050" stroke-width="1.2"/><path d="M10 10.5 L10 2.2 A8.3 8.3 0 0 1 17 15Z" fill="#2b2b2b"/><rect x="13" y="13" width="10.5" height="10.5" rx="1.5" fill="#54564c"/><path d="M18.2 15.2 l3.8 6 h-7.6z" fill="#8a8a84"/></g><g transform="translate(969.5,129)"><circle cx="10" cy="10.5" r="8.3" fill="#3a3a3a" stroke="#505050" stroke-width="1.2"/><path d="M10 10.5 L10 2.2 A8.3 8.3 0 0 1 17 15Z" fill="#2b2b2b"/><rect x="13" y="13" width="10.5" height="10.5" rx="1.5" fill="#54564c"/><path d="M18.2 21.5 l3.8 -6 h-7.6z" fill="#8a8a84"/></g><g transform="translate(1004,129)"><path d="M3 4 Q6 2.5 8 8 L11 20 M14.5 3 L8.5 14" stroke="#5a5c52" stroke-width="1.6" fill="none"/><rect x="13" y="13" width="10.5" height="10.5" rx="1.5" fill="#54564c"/><path d="M18.2 15.2 l3.8 6 h-7.6z" fill="#8a8a84"/></g><g transform="translate(1038.5,129)"><path d="M3 4 Q6 2.5 8 8 L11 20 M14.5 3 L8.5 14" stroke="#5a5c52" stroke-width="1.6" fill="none"/><rect x="13" y="13" width="10.5" height="10.5" rx="1.5" fill="#54564c"/><path d="M18.2 21.5 l3.8 -6 h-7.6z" fill="#8a8a84"/></g><rect x="254" y="167" width="24.5" height="24.5" fill="#fff"/><g transform="translate(266.2,179.2) rotate(-22)" fill="none" stroke="#8c2a33"><circle r="10.2" stroke-width="1.3"/><circle r="7.6" stroke-width=".7"/><rect x="-11.5" y="-3" width="23" height="6" fill="#fff" stroke-width="1"/><text x="0" y="2.6" font-size="5.6" font-weight="700" fill="#8c2a33" stroke="none" text-anchor="middle" font-family="Liberation Sans,sans-serif" letter-spacing=".9">STAMP</text></g><rect x="290.2" y="172" width="1.6" height="14" fill="#5c5c5c"/><g transform="translate(296.5,167)"><path d="M14 1 L8.2 10.5 Q7 13 9.2 15.2" fill="none" stroke="#bccd35" stroke-width="4.2"/><path d="M10 23 L15.8 13.5 Q17 11 14.8 8.8" fill="none" stroke="#a2b82a" stroke-width="4.2"/></g><rect x="333.2" y="172" width="1.6" height="14" fill="#5c5c5c"/><rect x="340.5" y="167" width="24" height="24.5" fill="#5faa3f"/><path d="M340.5 167 h24 v11 Q352 184 340.5 178z" fill="#79bd5a" opacity=".75"/><circle cx="355" cy="176.5" r="6.3" fill="none" stroke="#f4f8f2" stroke-width="2"/><path d="M350.3 181.5 L344.5 187.5" stroke="#f4f8f2" stroke-width="2.8" stroke-linecap="round"/><g transform="translate(373.5,167)"><rect x="1" y="1" width="20" height="22" fill="#f6d548"/><path d="M11 1 Q9 6 13 10 Q18 14 17 23 H21 V12 Q16 9 15 1Z" fill="#4e8fd6"/><path d="M1 19 Q6 16 10 20 L12 23 H1Z" fill="#4e8fd6"/><path d="M1 1 H8 L9 4 L2 6Z" fill="#4fb04a"/><rect x="1.5" y="8" width="3.5" height="7" fill="#c0457a"/><rect x="6.5" y="9" width="3" height="5" fill="#3d8a8a"/><path d="M12 14 Q16 12 21 16 V21 Q15 20 12 14Z" fill="#f6d548"/><path d="M10.5 15 L23 2" stroke="#8a4413" stroke-width="2.8" stroke-linecap="round"/><path d="M8.5 17.3 L11 14.6" stroke="#e8e2d2" stroke-width="2"/><path d="M3 20 L8.5 17.3" stroke="#ddd" stroke-width="1"/></g></svg>
<div class="b" style="left:251.6px;top:46px;width:1.4px;height:33px;background:#d7801a;"></div>
<div class="b" style="left:3px;top:55px;width:2px;height:12px;background:#555;"></div>
<div class="b" style="left:3px;top:95px;width:2px;height:12px;background:#555;"></div>
<div class="b" style="left:3px;top:134px;width:2px;height:12px;background:#555;"></div>
<div class="b" style="left:3px;top:171px;width:2px;height:12px;background:#555;"></div>
<!-- mapcanvas -->
<svg style="left:259px;top:229px" width="859" height="507" viewBox="259 229 859 507"><defs><clipPath id="cv"><rect x="259" y="229" width="859" height="507"/></clipPath><filter id="bl1"><feGaussianBlur stdDeviation="1"/></filter><filter id="bl2"><feGaussianBlur stdDeviation="2.2"/></filter><filter id="bl6"><feGaussianBlur stdDeviation="7"/></filter><filter id="bl14"><feGaussianBlur stdDeviation="16"/></filter><filter id="nz" x="0" y="0" width="100%" height="100%"><feTurbulence type="fractalNoise" baseFrequency="0.12 0.03" numOctaves="3" seed="7"/><feColorMatrix values="0 0 0 0 0.5  0 0 0 0 0.55  0 0 0 0 0.52  0.9 0.9 0.9 0 -1.05"/></filter><linearGradient id="gb1" gradientUnits="userSpaceOnUse" x1="300" y1="332" x2="331.2" y2="298.3"><stop offset="0" stop-color="#aa742d"/><stop offset=".25" stop-color="#ad772f"/><stop offset=".5" stop-color="#a9722c"/><stop offset=".8" stop-color="#ac762e"/><stop offset="1" stop-color="#ae7830"/></linearGradient><linearGradient id="gb1u" gradientUnits="userSpaceOnUse" x1="430" y1="256.5" x2="461" y2="223"><stop offset="0" stop-color="#ad772f"/><stop offset=".3" stop-color="#aa742d"/><stop offset=".6" stop-color="#ae7831"/><stop offset="1" stop-color="#aa742e"/></linearGradient><linearGradient id="gb2" gradientUnits="userSpaceOnUse" x1="760" y1="556" x2="788" y2="526"><stop offset="0" stop-color="#ad772f"/><stop offset=".25" stop-color="#ab752e"/><stop offset=".55" stop-color="#b07a2e"/><stop offset=".8" stop-color="#ab752d"/><stop offset="1" stop-color="#aa742d"/></linearGradient><linearGradient id="gb2l" gradientUnits="userSpaceOnUse" x1="700" y1="702" x2="729.5" y2="670"><stop offset="0" stop-color="#aa752e"/><stop offset=".35" stop-color="#ad772f"/><stop offset=".6" stop-color="#a9722c"/><stop offset=".85" stop-color="#ad7830"/><stop offset="1" stop-color="#ae7931"/></linearGradient></defs><g clip-path="url(#cv)"><rect x="259" y="229" width="859" height="507" fill="#252d2e"/><g filter="url(#bl14)"><ellipse cx="800" cy="300" rx="90" ry="140" fill="#2a3436" transform="rotate(17 800 300)"/><ellipse cx="1000" cy="330" rx="70" ry="220" fill="#20282a" transform="rotate(17 1000 330)"/><ellipse cx="900" cy="520" rx="120" ry="80" fill="#283033"/><ellipse cx="1080" cy="560" rx="60" ry="160" fill="#22292b"/><ellipse cx="320" cy="560" rx="70" ry="170" fill="#293c36" transform="rotate(17 320 560)"/><ellipse cx="290" cy="430" rx="40" ry="60" fill="#2b3e3a"/><ellipse cx="640" cy="690" rx="50" ry="60" fill="#26383a"/><ellipse cx="285" cy="700" rx="45" ry="70" fill="#2f4744"/></g><rect x="0" y="-100" width="1500" height="1200" filter="url(#nz)" opacity=".09" transform="rotate(17 700 480)"/><g filter="url(#bl1)"><polygon points="702.5,229 717,229 560.996,736 546.496,736" fill="#2a2a2d"/><polygon points="717,229 719.5,229 563.496,736 560.996,736" fill="#7d8496"/><polygon points="719.5,229 723,229 566.996,736 563.496,736" fill="#d9dde6"/><polygon points="723,229 726.5,229 570.496,736 566.996,736" fill="#7f8699"/><polygon points="726.5,229 735.5,229 579.496,736 570.496,736" fill="#5a6074"/><polygon points="735.5,229 742.5,229 586.496,736 579.496,736" fill="#3c434c"/></g><g filter="url(#bl1)"><polygon points="481.5,229 468.5,229 313.003,736 326.003,736" fill="#4e4f61"/><polygon points="468.5,229 460.5,229 305.003,736 313.003,736" fill="#3f4a52"/><polygon points="490.5,229 480.5,229 325.003,736 335.003,736" fill="#34323d"/></g><polygon points="493,229 489.5,229 334.003,736 337.503,736" fill="#e6e8f0"/><polygon points="497.5,229 493,229 337.503,736 342.003,736" fill="#27304a"/><g filter="url(#bl2)"><polygon points="250,343.784 330,417.704 330,459.704 250,385.784" fill="#2f393b"/><polygon points="250,282.784 425,444.484 425,476.484 250,314.784" fill="#454a57"/><polygon points="250,302.784 400,441.384 400,445.384 250,306.784" fill="#626873"/><polygon points="250,314.784 420,471.864 420,480.864 250,323.784" fill="#3a4a4a"/></g><path d="M262 420 Q300 440 318 500 Q330 560 300 640" fill="none" stroke="#1f2c29" stroke-width="2" filter="url(#bl1)"/><g filter="url(#bl1)"><polygon points="690,437.332 1040,761.782 1040,746.782 690,422.332" fill="#55586a"/><polygon points="700,431.602 1010,718.972 1010,714.972 700,427.602" fill="#1a2022"/></g><path d="M990 712 Q1060 738 1120 700" fill="none" stroke="#4a4858" stroke-width="9" filter="url(#bl2)"/><path d="M1000 740 Q1080 740 1120 706 L1120 740Z" fill="#3f3d4a" filter="url(#bl1)"/><path d="M1062 737 Q1098 730 1118 717 L1118 737Z" fill="#8fa3a8"/><g filter="url(#bl2)"><polygon points="588,600 735,736 700,736 598,640 575,736 555,736" fill="#555a6a"/><polygon points="612,660 690,736 590,736" fill="#1f3233"/></g><polygon points="591.42,590 605.42,590 560.496,736 546.496,736" fill="#2e2e31" filter="url(#bl1)"/><polygon points="604.843,600 609.343,600 567.496,736 562.996,736" fill="#dfe2ea" filter="url(#bl1)"/><g filter="url(#bl1)"><polygon points="700,443 776,430.5 781,436 779,441 726,461 708,456" fill="#e9edef"/><polygon points="712,458 726,462 760,449 740,452" fill="#9aa3ad"/><polygon points="684,424 692,420 706,440 698,445" fill="#f4f6f7"/><polygon points="642,437 650,432 664,452 652,456" fill="#e6e9ee"/></g><g filter="url(#bl1)"><ellipse cx="1001" cy="373" rx="3.8" ry="3.2" fill="#cfcfc8"/><ellipse cx="1052" cy="386" rx="2" ry="3" fill="#d8d8d8"/><ellipse cx="758" cy="347" rx="5" ry="2.2" fill="#8f9898"/><ellipse cx="758" cy="368" rx="2" ry="2" fill="#858c8c"/><ellipse cx="995" cy="606" rx="4.5" ry="2.6" fill="#a9adad"/><ellipse cx="1024" cy="635" rx="2.6" ry="2.4" fill="#b5b8b8"/><ellipse cx="989" cy="656" rx="3" ry="2" fill="#b9bcbc"/><ellipse cx="997" cy="661" rx="3.4" ry="1.8" fill="#b9bcbc"/><ellipse cx="1056" cy="652" rx="1.6" ry="4" fill="#c3c6c6"/><ellipse cx="302" cy="477" rx="2.5" ry="1.5" fill="#9aa39f"/><ellipse cx="352" cy="569" rx="2.2" ry="1.8" fill="#8f9797"/><ellipse cx="1049" cy="388" rx="3" ry="4" fill="#0f1414"/><ellipse cx="992" cy="600" rx="6" ry="3" fill="#141a1a"/></g><polygon points="469,229 550.9,304.7 406.4,430.3 259,294.1 259,229" fill="url(#gb1)"/><polygon points="401.2,229 469,229 550.9,304.7 482,279.6 467.2,278.3 455.7,275.2 442.8,268 427,253.7" fill="url(#gb1u)"/><polygon points="530.1,545.7 674,419.5 1016,737 736.4,737" fill="url(#gb2)"/><polygon points="594,568.5 603,567.8 614.7,569.2 622,571.5 631.7,575.8 638,580 646,587.3 660.4,604.5 703.4,644.7 760.7,697.7 804.5,737 736.4,737 530.1,545.7" fill="url(#gb2l)"/><g filter="url(#bl1)"><polygon points="463,262 467,262 462.5,279 458,278" fill="#e9c486" opacity=".8"/><polygon points="641,452 700,438 712,452 668,476" fill="#f2cf96" opacity=".9"/><polygon points="676,474 716,460 724,468 684,486" fill="#8f5e1c" opacity=".8"/><polygon points="746,541 770,539 776,548 752,553" fill="#ecc98e" opacity=".85"/><polygon points="606,573 611,573 601,607 596,604" fill="#e7c283" opacity=".8"/><polygon points="659,607 672,617 676,634 664,648 660,636" fill="#8a5b1c" opacity=".85"/><path d="M612 615 Q632 596 654 610" fill="none" stroke="#caa060" stroke-width="1.6" opacity=".8"/></g><polygon points="259,229 401.2,229 427,253.7 442.8,268 455.7,275.2 467.2,278.3 482,279.6 445.5,399.5 436,393.5 427,385.6 409.8,368.4 392,352.5 375.4,339.7 352.5,323.9 336.7,310.4 339.6,306.7 259,231.5" fill="#be9550" stroke="#6f5524" stroke-width=".7"/><polygon points="630,454 640.5,445.9 647,456 654.8,464.5 672,480.3 706.5,510.4 745.2,540.5 742.3,544.8 924.7,710.7 941.9,726.5 973.4,737 804.5,737 760.7,697.7 703.4,644.7 660.4,604.5 646,587.3 638,580 631.7,575.8 622,571.5 614.7,569.2 603,567.8 594,568.5" fill="#be9550" stroke="#6f5524" stroke-width=".7"/><polygon points="495.5,229 704.5,229 548.188,737 339.696,737" fill="#ff9e17"/><polyline points="440,202.2 550.9,304.7 406.4,430.3 240,276.5" fill="none" stroke="#5b4313" stroke-width=".8" opacity=".85"/><polyline points="758.1,757.2 530.1,545.7 674,419.5 1030,749.5" fill="none" stroke="#5b4313" stroke-width=".8" opacity=".85"/><path d="M480 279.6 L443.2 399.5 M638.3 444 L600.2 568" stroke="#6f5524" stroke-width=".7" fill="none"/></g></svg>
<!-- layers -->
<div class="b" style="left:1px;top:521px;width:250px;height:216px;background:#1e1e1e;border:1px solid #5a5a5a;"></div>
<div class="b" style="left:3px;top:493px;width:3px;height:25px;border:1px solid #d7801a;border-right:none;"></div>
<div class="b" style="left:0px;top:240px;width:2px;height:281px;background:#2a2a2a;"></div>
<div class="b" style="left:2px;top:523px;width:237px;height:24px;background:#0d6b05;"></div>
<span id="t15" class="t " style="left:71.4px;top:527.5px;font-size:10.96px;line-height:16px;color:#fff;font-weight:700;"><u>Taxiway E</u></span>
<span id="t16" class="t " style="left:71.4px;top:551.5px;font-size:10.61px;line-height:16px;color:#fff;">FAOR</span>
<span id="t17" class="t " style="left:89.5px;top:575.5px;font-size:11.22px;line-height:16px;color:#fff;font-weight:700;">014_stopway_LINE</span>
<span id="t18" class="t " style="left:91.2px;top:599.5px;font-size:12.5px;line-height:16px;color:#fff;font-weight:700;letter-spacing:-0.202px;">RW 03L/21R</span>
<span id="t19" class="t " style="left:91.2px;top:623.5px;font-size:11.16px;line-height:16px;color:#fff;font-weight:700;">Taxiways</span>
<span id="t20" class="t " style="left:91.2px;top:647.5px;font-size:11.04px;line-height:16px;color:#fff;">FAOR Taxiways</span>
<span id="t21" class="t " style="left:109.7px;top:671.5px;font-size:11.1px;line-height:16px;color:#fff;font-weight:700;">TAXIWAY_E</span>
<span id="t22" class="t " style="left:89.5px;top:695.5px;font-size:12.5px;line-height:16px;color:#fff;font-weight:700;letter-spacing:-0.292px;">RW 03L/21R Centerline</span>
<svg style="left:0;top:520px" width="252" height="218" viewBox="0 520 252 218"><defs><clipPath id="lyclip"><rect x="0" y="716" width="240" height="10.3"/></clipPath></defs><g transform="translate(34,535)"><path d="M-8 0 Q-4.6 -5.2 0 -5.2 Q4.6 -5.2 8 0 Q4.6 5.2 0 5.2 Q-4.6 5.2 -8 0Z" fill="none" stroke="#fff" stroke-width="1.8"/><circle cx="0" cy="-0.4" r="3.8" fill="#fff"/><circle cx="-1.4" cy="-1.9" r="1.5" fill="#1e1e1e"/></g><rect x="49.5" y="527.2" width="15.3" height="15.6" fill="#8c8c0e"/><g transform="translate(34,559)"><path d="M-8 0 Q-4.6 -5.2 0 -5.2 Q4.6 -5.2 8 0 Q4.6 5.2 0 5.2 Q-4.6 5.2 -8 0Z" fill="none" stroke="#fff" stroke-width="1.8"/><circle cx="0" cy="-0.4" r="3.8" fill="#fff"/><circle cx="-1.4" cy="-1.9" r="1.5" fill="#1e1e1e"/></g><g transform="translate(50.5,553)"><path d="M0.5 3 V12.5 H4" fill="none" stroke="#cfcfcf" stroke-width="1"/><rect x="3" y="1.5" width="8.5" height="10" fill="#e8e8e8"/><rect x="5.5" y="-0.5" width="7" height="10" fill="#fafafa" stroke="#9a9a9a" stroke-width=".5"/><path d="M7 -2 V6.5 M9.6 1 V6.5" stroke="#3f6fb0" stroke-width="1"/><path d="M7 -2 Q8.3 -3.4 9.6 -2" fill="none" stroke="#3f6fb0" stroke-width="1"/></g><rect x="21.5" y="570" width="217.5" height="1" fill="#3b3b3b"/><g transform="translate(54,583)"><path d="M-8 0 Q-4.6 -5.2 0 -5.2 Q4.6 -5.2 8 0 Q4.6 5.2 0 5.2 Q-4.6 5.2 -8 0Z" fill="none" stroke="#fff" stroke-width="1.8"/><circle cx="0" cy="-0.4" r="3.8" fill="#fff"/><circle cx="-1.4" cy="-1.9" r="1.5" fill="#1e1e1e"/></g><rect x="69" y="582.8" width="14.5" height="1.4" fill="#6d5f7c"/><rect x="42" y="594" width="197" height="1" fill="#3b3b3b"/><g transform="translate(54,607)"><path d="M-8 0 Q-4.6 -5.2 0 -5.2 Q4.6 -5.2 8 0 Q4.6 5.2 0 5.2 Q-4.6 5.2 -8 0Z" fill="none" stroke="#fff" stroke-width="1.8"/><circle cx="0" cy="-0.4" r="3.8" fill="#fff"/><circle cx="-1.4" cy="-1.9" r="1.5" fill="#1e1e1e"/></g><rect x="69.6" y="599.2" width="15.3" height="15.6" fill="#ff9e17"/><rect x="42" y="618" width="197" height="1" fill="#3b3b3b"/><g transform="translate(54,631)"><path d="M-8 0 Q-4.6 -5.2 0 -5.2 Q4.6 -5.2 8 0 Q4.6 5.2 0 5.2 Q-4.6 5.2 -8 0Z" fill="none" stroke="#fff" stroke-width="1.8"/><circle cx="0" cy="-0.4" r="3.8" fill="#fff"/><circle cx="-1.4" cy="-1.9" r="1.5" fill="#1e1e1e"/></g><rect x="69.6" y="623.2" width="15.3" height="15.6" fill="#7f8c8d"/><rect x="42" y="642" width="197" height="1" fill="#3b3b3b"/><g transform="translate(54,655)"><path d="M-8 0 Q-4.6 -5.2 0 -5.2 Q4.6 -5.2 8 0 Q4.6 5.2 0 5.2 Q-4.6 5.2 -8 0Z" fill="none" stroke="#fff" stroke-width="1.8"/><circle cx="0" cy="-0.4" r="3.8" fill="#fff"/><circle cx="-1.4" cy="-1.9" r="1.5" fill="#1e1e1e"/></g><g transform="translate(70.7,649)"><path d="M0.5 3 V12.5 H4" fill="none" stroke="#cfcfcf" stroke-width="1"/><rect x="3" y="1.5" width="8.5" height="10" fill="#e8e8e8"/><rect x="5.5" y="-0.5" width="7" height="10" fill="#fafafa" stroke="#9a9a9a" stroke-width=".5"/><path d="M7 -2 V6.5 M9.6 1 V6.5" stroke="#3f6fb0" stroke-width="1"/><path d="M7 -2 Q8.3 -3.4 9.6 -2" fill="none" stroke="#3f6fb0" stroke-width="1"/></g><rect x="42" y="666" width="197" height="1" fill="#3b3b3b"/><g transform="translate(74,679)"><path d="M-8 0 Q-4.6 -5.2 0 -5.2 Q4.6 -5.2 8 0 Q4.6 5.2 0 5.2 Q-4.6 5.2 -8 0Z" fill="none" stroke="#fff" stroke-width="1.8"/><circle cx="0" cy="-0.4" r="3.8" fill="#fff"/><circle cx="-1.4" cy="-1.9" r="1.5" fill="#1e1e1e"/></g><rect x="89" y="678.8" width="14.5" height="1.4" fill="#b5701f"/><rect x="62" y="690" width="177" height="1" fill="#3b3b3b"/><g transform="translate(54,703)"><path d="M-8 0 Q-4.6 -5.2 0 -5.2 Q4.6 -5.2 8 0 Q4.6 5.2 0 5.2 Q-4.6 5.2 -8 0Z" fill="none" stroke="#fff" stroke-width="1.8"/><circle cx="0" cy="-0.4" r="3.8" fill="#fff"/><circle cx="-1.4" cy="-1.9" r="1.5" fill="#1e1e1e"/></g><rect x="69" y="702.8" width="14.5" height="1.4" fill="#a35560"/><rect x="42" y="714" width="197" height="1" fill="#3b3b3b"/><path d="M8 556.5 h7 l-3.5 5.5z" fill="#7d7d7d"/><path d="M28 652.5 h7 l-3.5 5.5z" fill="#7d7d7d"/><g clip-path="url(#lyclip)"><g transform="translate(54,727.5)"><path d="M-8 0 Q-4.6 -5.2 0 -5.2 Q4.6 -5.2 8 0 Q4.6 5.2 0 5.2 Q-4.6 5.2 -8 0Z" fill="none" stroke="#fff" stroke-width="1.8"/><circle cx="0" cy="-0.4" r="3.8" fill="#fff"/><circle cx="-1.4" cy="-1.9" r="1.5" fill="#1e1e1e"/></g></g></svg>
<div class="b" style="left:60px;top:716px;width:179px;height:10.3px;overflow:hidden"><span id="t23" class="t " style="left:9px;top:4.5px;font-size:12.5px;line-height:16px;color:#fff;font-weight:700;"><span style="color:#a35560;position:relative;top:-1px;font-weight:400">— </span>&nbsp;013_runway_LINE</span></div>
<div class="b" style="left:239.6px;top:523px;width:9.4px;height:203.5px;background:#585858;"></div>
<div class="b" style="left:239.6px;top:523.5px;width:9.4px;height:83px;background:#383838;border:1px solid #535353;"></div>
<div class="b" style="left:2px;top:726.5px;width:237.6px;height:9.5px;background:#585858;"></div>
<div class="b" style="left:2.5px;top:726.5px;width:176.5px;height:9.5px;background:#383838;border:1px solid #535353;"></div>
<div class="b" style="left:239.6px;top:726.5px;width:9.4px;height:9.5px;background:#222;"></div>
<!-- rightpanel -->
<div class="b" style="left:257px;top:198px;width:863px;height:1px;background:#262626;"></div>
<div class="b" style="left:257px;top:199px;width:863px;height:30px;background:#e8f5fe;"></div>
<svg style="left:267px;top:203px" width="24" height="22" viewBox="0 0 24 22"><path d="M4 1.5 H19 Q22 1.5 22 4.5 V11 Q22 14 19 14 H11 L6 19 L7.5 14 H4 Q1.5 14 1.5 11 V4.5 Q1.5 1.5 4 1.5Z" fill="#fdfdfd" stroke="#6e6e6e" stroke-width="1"/></svg>
<span id="t24" class="t " style="left:300.3px;top:206.5px;font-size:10.68px;line-height:16px;color:#26348b;">Multiple plugin updates are available</span>
<div class="b" style="left:958px;top:202px;width:91px;height:22.6px;background:#4c4c4c;border:1px solid #222;"></div>
<span id="t25" class="t " style="left:962.3px;top:205.4px;font-size:10.93px;line-height:16px;color:#cdcdcd;">Install Updates...</span>
<svg style="left:1078.5px;top:203.3px" width="19" height="19" viewBox="0 0 19 19"><circle cx="9.5" cy="9.5" r="8.2" fill="#3a3a3a"/><path d="M5.8 5.8 L13.2 13.2 M13.2 5.8 L5.8 13.2" stroke="#fff" stroke-width="2.3"/></svg>
<span id="t26" class="t " style="left:1200.3px;top:201.3px;font-size:11.54px;line-height:16px;color:#d6d6d6;">Layer Styling</span>
<svg style="left:1353.5px;top:202px" width="9" height="9" viewBox="0 0 9 9"><rect x=".5" y="2.5" width="6" height="6" fill="none" stroke="#6a6a6a"/><rect x="3" y=".5" width="5.5" height="5.5" fill="#323232" stroke="#6a6a6a"/></svg>
<div class="b" style="left:1130.5px;top:221.5px;width:231px;height:23.2px;background:#4c4c4c;border:1px solid #222;"></div>
<svg style="left:1135px;top:226px" width="16" height="13" viewBox="0 0 16 13"><path d="M1 2 Q4 .5 7 2.5 Q11 .5 15 2 V11 Q11 8.5 7.5 10.5 Q4 9 1 11Z" fill="#d9d9d9"/></svg>
<span id="t27" class="t " style="left:1155.9px;top:225.5px;font-size:11px;line-height:16px;color:#d6d6d6;">Taxiway E</span>
<svg style="left:1348.5px;top:230.5px" width="8" height="6" viewBox="0 0 8 6"><path d="M1.3 1 H6.7 L4 5Z" fill="#d0d0d0"/></svg>
<div class="b" style="left:1131.5px;top:252.5px;width:37px;height:209px;background:#1e1e1e;border:1px solid #5a5a5a;"></div>
<div class="b" style="left:1133px;top:254px;width:24.5px;height:30px;background:#0d6b05;"></div>
<div class="b" style="left:1157.2px;top:254px;width:9.8px;height:205.5px;background:#585858;"></div>
<div class="b" style="left:1157.2px;top:254px;width:9.8px;height:174px;background:#363636;border:1px solid #505050;"></div>
<svg style="left:1130px;top:250px" width="40" height="214" viewBox="1130 250 40 214"><defs><clipPath id="tabclip"><rect x="1132.5" y="253.5" width="25" height="207"/></clipPath></defs><g clip-path="url(#tabclip)"><g transform="translate(1149.5,268.5) scale(.88)"><path d="M-10 2 L0 -4 L10 0 L1 7Z" fill="#e4d9a0"/><path d="M-10 2 L1 7 L1 11 L-10 6Z" fill="#d34a3a"/><path d="M1 7 L10 0 V4 L1 11Z" fill="#3f7fd0"/><path d="M-6 0 L2 -4 L6 -2 L-2 3Z" fill="#65b84a"/><path d="M2 -8 L10 -2 L8 1 L0 -5Z" fill="#e9b566"/><path d="M7 -12 L12 -8 L10 -2 L2 -8Z" fill="#c98b3a"/></g><g transform="translate(1149.5,299)"><path d="M-9.5 0 L-5.5 -5 H12 V5 H-5.5Z" fill="#f5d730"/><text x="3.5" y="3" font-size="8.5" font-weight="700" fill="#222" text-anchor="middle" font-family="Liberation Sans,sans-serif">abc</text></g><g transform="translate(1149.5,327.7)"><rect x="-10" y="-6" width="24" height="12" rx="5" fill="#f2f2f2"/><text x="2.5" y="3.4" font-size="10" font-weight="700" fill="#111" text-anchor="middle" font-family="Liberation Sans,sans-serif">abc</text></g><g transform="translate(1149.5,359) scale(.85)"><path d="M0 -11 L10 -5 L0 1 L-10 -5Z" fill="#e03a3a"/><path d="M-10 -5 L0 1 V12 L-10 6Z" fill="#57b947"/><path d="M10 -5 L0 1 V12 L10 6Z" fill="#f3dc3a"/></g><g transform="translate(1149.5,388.7)"><path d="M-9 -2 L2 -8 L10 -4 L9 6 L-3 8 L-10 5Z" fill="#8c8c8c"/><path d="M-9 -2 L-1 1 L-3 8 M2 -8 L-1 1 L9 6" stroke="#b9b9b9" stroke-width="1" fill="none"/></g><g transform="translate(1149.5,419.5) scale(.9)"><path d="M0 -5 V1 M-7 6 V1 H7 V6" stroke="#e9a33a" stroke-width="1.6" fill="none"/><rect x="-4.5" y="-11" width="9" height="7.5" fill="#e0515a"/><rect x="-11" y="5" width="8" height="7" fill="#f3dc3a"/><rect x="3" y="5" width="8" height="7" fill="#6da7e0"/></g><g transform="translate(1149.5,448)"><path d="M-8 -1 Q-8 -7 -1 -7 V-10 L5 -5.5 L-1 -1 V-4 Q-5 -4 -5 -1Z" fill="#4fae5a"/><path d="M10 6 Q10 1 4 1 V-2 L-2 2.5 L4 7 V4 Q7 4 7 6Z" fill="#ee8a2c" transform="translate(0,3)"/></g></g></svg>
<div class="b" style="left:1198px;top:258px;width:59px;height:28px;background:#a86f25;"></div>
<div class="b" style="left:1283px;top:257.5px;width:68.5px;height:65.5px;background:#1e1e1e;border:1px solid #5a5a5a;"></div>
<div class="b" style="left:1285px;top:312px;width:66px;height:9.3px;background:#363636;border:1px solid #555;"></div>
<div class="b" style="left:1351.5px;top:257.5px;width:9.8px;height:162px;background:#585858;"></div>
<div class="b" style="left:1351.5px;top:320.3px;width:9.8px;height:99.2px;background:#363636;border:1px solid #555;"></div>
<span id="t28" class="t " style="left:1183.5px;top:351px;font-size:10.67px;line-height:16px;color:#d6d6d6;">Opacity</span>
<div class="b" style="left:1232px;top:352px;width:28px;height:10.5px;background:#0e6e06;"></div>
<div class="b" style="left:1260px;top:352px;width:26px;height:10.5px;background:#5a5a5a;"></div>
<div class="b" style="left:1286px;top:352px;width:28px;height:10.5px;background:#262626;"></div>
<div class="b" style="left:1318px;top:351px;width:33.5px;height:15.5px;background:#1e1e1e;border:1px solid #5a5a5a;overflow:hidden"><span id="t29" class="t " style="left:2.8px;top:-1.2px;font-size:11.5px;line-height:16px;color:#f0f0f0;">50.0 %</span></div>
<div class="b" style="left:1178px;top:378px;width:173.5px;height:10px;border:1px solid #5a5a5a;"></div>
<svg style="left:1181px;top:407px" width="8" height="12" viewBox="0 0 8 12"><path d="M1 1 L7 6 L1 11Z" fill="none" stroke="#c8c8c8" stroke-width="1"/></svg>
<span id="t30" class="t " style="left:1197.1px;top:405.2px;font-size:11.74px;line-height:16px;color:#f0f0f0;font-weight:700;">Layer Rendering</span>
<div class="b" style="left:1173.5px;top:420.2px;width:178px;height:10px;background:#585858;"></div>
<div class="b" style="left:1173.5px;top:420.2px;width:114.5px;height:10px;background:#363636;border:1px solid #555;"></div>
<div class="b" style="left:1351.5px;top:420.2px;width:9.8px;height:10px;background:#2a2a2a;"></div>
<div class="b" style="left:1173.5px;top:437.3px;width:24px;height:24px;background:#4c4c4c;border:1px solid #232323;"></div>
<svg style="left:1177px;top:442px" width="17" height="15" viewBox="0 0 17 15"><path d="M1 5.5 L7 .8 V3.6 Q15 3.6 14.5 10 Q14 13.5 10 14.5 Q12 11 7 8.4 V11Z" fill="#f0924a"/></svg>
<div class="b" style="left:1204.3px;top:437.3px;width:24px;height:24px;background:#4c4c4c;border:1px solid #232323;"></div>
<svg style="left:1208px;top:442px" width="17" height="15" viewBox="0 0 17 15"><path d="M16 5.5 L10 .8 V3.6 Q2 3.6 2.5 10 Q3 13.5 7 14.5 Q5 11 10 8.4 V11Z" fill="#74c482"/></svg>
<div class="b" style="left:1238.3px;top:440.3px;width:17.3px;height:17.3px;background:#0d6b05;border:1px solid #2a2a2a;"></div>
<svg style="left:1240px;top:442px" width="15" height="15" viewBox="0 0 15 15"><path d="M2.5 8 L6 11.5 L12.5 3" fill="none" stroke="#fff" stroke-width="2"/></svg>
<span id="t31" class="t " style="left:1261px;top:441.5px;font-size:10.81px;line-height:16px;color:#d6d6d6;">Live update</span>
<div class="b" style="left:1325.5px;top:438.8px;width:36px;height:21.8px;background:#4c4c4c;border:1px solid #232323;"></div>
<span id="t32" class="t " style="left:1329.8px;top:441.5px;font-size:10.5px;line-height:16px;color:#d6d6d6;letter-spacing:-0.015px;">Apply</span>
<span id="t33" class="t " style="left:1182.2px;top:474px;font-size:11.74px;line-height:16px;color:#d6d6d6;">Processing Toolbox</span>
<svg style="left:1353.3px;top:475.5px" width="9" height="9" viewBox="0 0 9 9"><rect x=".5" y="2.5" width="6" height="6" fill="none" stroke="#6a6a6a"/><rect x="3" y=".5" width="5.5" height="5.5" fill="#323232" stroke="#6a6a6a"/></svg>
<svg style="left:1130px;top:490px" width="170" height="30" viewBox="1130 490 170 30"><g transform="translate(1141.5,505)"><g fill="#8a8a8a"><circle cx="3" cy="2" r="4.3"/></g><circle cx="3" cy="2" r="1.8" fill="#323232"/><path d="M-3 -3 L-3 -8.5" stroke="#e0262a" stroke-width="1.8" transform="rotate(0 -3 -3)"/><path d="M-3 -3 L-3 -8.5" stroke="#e0262a" stroke-width="1.8" transform="rotate(45 -3 -3)"/><path d="M-3 -3 L-3 -8.5" stroke="#e0262a" stroke-width="1.8" transform="rotate(90 -3 -3)"/><path d="M-3 -3 L-3 -8.5" stroke="#e0262a" stroke-width="1.8" transform="rotate(135 -3 -3)"/><path d="M-3 -3 L-3 -8.5" stroke="#e0262a" stroke-width="1.8" transform="rotate(180 -3 -3)"/><path d="M-3 -3 L-3 -8.5" stroke="#e0262a" stroke-width="1.8" transform="rotate(225 -3 -3)"/><path d="M-3 -3 L-3 -8.5" stroke="#e0262a" stroke-width="1.8" transform="rotate(270 -3 -3)"/><path d="M-3 -3 L-3 -8.5" stroke="#e0262a" stroke-width="1.8" transform="rotate(315 -3 -3)"/><circle cx="-3" cy="-3" r="3" fill="#e0262a"/><circle cx="6" cy="6" r="2.4" fill="#6f9ad3"/></g><g transform="translate(1160,497) scale(.68)"><path d="M11.8 1.5 Q7 1.5 7 4.5 V7.5 H12.5 V8.5 H5 Q1.5 8.5 1.5 12.5 Q1.5 16.5 5 16.5 H7 V13.5 Q7 11 10 11 H14.5 Q17 11 17 8.5 V4.5 Q17 1.5 11.8 1.5Z" fill="#4b8bbe"/><path d="M12.2 22.5 Q17 22.5 17 19.5 V16.5 H11.5 V15.5 H19 Q22.5 15.5 22.5 11.5 Q22.5 7.5 19 7.5 H17 V10.5 Q17 13 14 13 H9.5 Q7 13 7 15.5 V19.5 Q7 22.5 12.2 22.5Z" fill="#f6cf3f"/></g><path d="M1173 509 h6 l-3 4z" fill="#c8c8c8"/><circle cx="1193" cy="505" r="7" fill="#f2f2f2"/><path d="M1193 500.5 V505 L1196 507" stroke="#555" stroke-width="1.2" fill="none"/><path d="M1213.5 498 h7 l3.5 3.5 v11 h-10.5z" fill="#f2f2f2"/><path d="M1215.5 504 h6.5 M1215.5 506.5 h6.5 M1215.5 509 h6.5" stroke="#777" stroke-width=".8"/><rect x="1233.6" y="499" width="1.3" height="12" fill="#444"/><rect x="1243.5" y="498.5" width="11" height="10.5" fill="#f5dc3c" stroke="#c9ad22" stroke-width=".6"/><path d="M1250 512.5 L1251 509.5 L1256 502 L1258 503.4 L1253 511Z" fill="#a87a3a" stroke="#333" stroke-width=".5"/><rect x="1265" y="499" width="1.3" height="12" fill="#444"/><path d="M1276 500 L1283 507" stroke="#d9d9d9" stroke-width="2.6" stroke-linecap="round"/><circle cx="1276" cy="500" r="3" fill="#d9d9d9"/><circle cx="1274.7" cy="498.7" r="1.5" fill="#323232"/><path d="M1282.5 506.5 L1286.5 510.5" stroke="#e8b43a" stroke-width="2.8" stroke-linecap="round"/></svg>
<div class="b" style="left:1126.5px;top:521px;width:240px;height:21.8px;background:#1e1e1e;border:1px solid #5a5a5a;"></div>
<svg style="left:1134.5px;top:526px" width="14" height="14" viewBox="0 0 14 14"><circle cx="5.6" cy="5.6" r="4" fill="none" stroke="#b5b5b5" stroke-width="1.4"/><path d="M8.6 8.6 L12.6 12.6" stroke="#b5b5b5" stroke-width="1.6"/></svg>
<span id="t34" class="t " style="left:1156.2px;top:525px;font-size:10.64px;line-height:16px;color:#7f7f7f;">Search...</span>
<div class="b" style="left:1126.5px;top:543.5px;width:240px;height:194px;background:#1e1e1e;border:1px solid #5a5a5a;"></div>
<div class="b" style="left:1126.5px;top:543.5px;width:228px;height:193px;overflow:hidden"><span id="t35" class="t " style="left:46.7px;top:3.6px;font-size:11.64px;line-height:16px;color:#fff;letter-spacing:-0.136px;">Recently used</span><span id="t36" class="t " style="left:46.7px;top:21.65px;font-size:11.64px;line-height:16px;color:#fff;letter-spacing:-0.157px;">3D Tiles</span><span id="t37" class="t " style="left:46.7px;top:39.7px;font-size:12px;line-height:16px;color:#fff;letter-spacing:-0.041px;">Cartography</span><span id="t38" class="t " style="left:46.7px;top:57.75px;font-size:11.64px;line-height:16px;color:#fff;letter-spacing:-0.254px;">Database</span><span id="t39" class="t " style="left:46.7px;top:75.8px;font-size:12px;line-height:16px;color:#fff;letter-spacing:-0.123px;">File tools</span><span id="t40" class="t " style="left:46.7px;top:93.85px;font-size:10.56px;line-height:16px;color:#fff;letter-spacing:-0.501px;">GPS</span><span id="t41" class="t " style="left:46.7px;top:111.9px;font-size:12px;line-height:16px;color:#fff;letter-spacing:0.096px;">Interpolation</span><span id="t42" class="t " style="left:46.7px;top:129.95px;font-size:12px;line-height:16px;color:#fff;letter-spacing:-0.200px;">Layer tools</span><span id="t43" class="t " style="left:46.7px;top:148px;font-size:12px;line-height:16px;color:#fff;letter-spacing:-0.186px;">Mesh</span><span id="t44" class="t " style="left:46.7px;top:166.05px;font-size:12px;line-height:16px;color:#fff;letter-spacing:-0.131px;">Network analysis</span><span id="t45" class="t " style="left:46.7px;top:184.1px;font-size:12px;line-height:16px;color:#fff;letter-spacing:-0.278px;">Plots</span><svg style="left:0;top:0" width="228" height="193" viewBox="1126.5 543.5 228 193"><path d="M1135.5 551.6 l4.5 3.2 -4.5 3.2z" fill="#8a8a8a"/><circle cx="1158.6" cy="554.3" r="7" fill="#f2f2f2"/><path d="M1158.6 549.8 V554.3 L1161.6 556.3" stroke="#555" stroke-width="1.2" fill="none"/><path d="M1135.5 569.65 l4.5 3.2 -4.5 3.2z" fill="#8a8a8a"/><g transform="translate(1151.3,565.35) scale(0.9375)"><circle cx="7.3" cy="7.3" r="5" fill="none" stroke="#8cc63f" stroke-width="3.4"/><path d="M8.5 8.5 L15 15" stroke="#589632" stroke-width="3.4"/><path d="M7 7 L10.2 10.2" stroke="#f0b13a" stroke-width="2.2"/></g><path d="M1135.5 587.7 l4.5 3.2 -4.5 3.2z" fill="#8a8a8a"/><g transform="translate(1151.3,583.4) scale(0.9375)"><circle cx="7.3" cy="7.3" r="5" fill="none" stroke="#8cc63f" stroke-width="3.4"/><path d="M8.5 8.5 L15 15" stroke="#589632" stroke-width="3.4"/><path d="M7 7 L10.2 10.2" stroke="#f0b13a" stroke-width="2.2"/></g><path d="M1135.5 605.75 l4.5 3.2 -4.5 3.2z" fill="#8a8a8a"/><g transform="translate(1151.3,601.45) scale(0.9375)"><circle cx="7.3" cy="7.3" r="5" fill="none" stroke="#8cc63f" stroke-width="3.4"/><path d="M8.5 8.5 L15 15" stroke="#589632" stroke-width="3.4"/><path d="M7 7 L10.2 10.2" stroke="#f0b13a" stroke-width="2.2"/></g><path d="M1135.5 623.8 l4.5 3.2 -4.5 3.2z" fill="#8a8a8a"/><g transform="translate(1151.3,619.5) scale(0.9375)"><circle cx="7.3" cy="7.3" r="5" fill="none" stroke="#8cc63f" stroke-width="3.4"/><path d="M8.5 8.5 L15 15" stroke="#589632" stroke-width="3.4"/><path d="M7 7 L10.2 10.2" stroke="#f0b13a" stroke-width="2.2"/></g><path d="M1135.5 641.85 l4.5 3.2 -4.5 3.2z" fill="#8a8a8a"/><g transform="translate(1151.3,637.55) scale(0.9375)"><circle cx="7.3" cy="7.3" r="5" fill="none" stroke="#8cc63f" stroke-width="3.4"/><path d="M8.5 8.5 L15 15" stroke="#589632" stroke-width="3.4"/><path d="M7 7 L10.2 10.2" stroke="#f0b13a" stroke-width="2.2"/></g><path d="M1135.5 659.9 l4.5 3.2 -4.5 3.2z" fill="#8a8a8a"/><g transform="translate(1151.3,655.6) scale(0.9375)"><circle cx="7.3" cy="7.3" r="5" fill="none" stroke="#8cc63f" stroke-width="3.4"/><path d="M8.5 8.5 L15 15" stroke="#589632" stroke-width="3.4"/><path d="M7 7 L10.2 10.2" stroke="#f0b13a" stroke-width="2.2"/></g><path d="M1135.5 677.95 l4.5 3.2 -4.5 3.2z" fill="#8a8a8a"/><g transform="translate(1151.3,673.65) scale(0.9375)"><circle cx="7.3" cy="7.3" r="5" fill="none" stroke="#8cc63f" stroke-width="3.4"/><path d="M8.5 8.5 L15 15" stroke="#589632" stroke-width="3.4"/><path d="M7 7 L10.2 10.2" stroke="#f0b13a" stroke-width="2.2"/></g><path d="M1135.5 696 l4.5 3.2 -4.5 3.2z" fill="#8a8a8a"/><g transform="translate(1151.3,691.7) scale(0.9375)"><circle cx="7.3" cy="7.3" r="5" fill="none" stroke="#8cc63f" stroke-width="3.4"/><path d="M8.5 8.5 L15 15" stroke="#589632" stroke-width="3.4"/><path d="M7 7 L10.2 10.2" stroke="#f0b13a" stroke-width="2.2"/></g><path d="M1135.5 714.05 l4.5 3.2 -4.5 3.2z" fill="#8a8a8a"/><g transform="translate(1151.3,709.75) scale(0.9375)"><circle cx="7.3" cy="7.3" r="5" fill="none" stroke="#8cc63f" stroke-width="3.4"/><path d="M8.5 8.5 L15 15" stroke="#589632" stroke-width="3.4"/><path d="M7 7 L10.2 10.2" stroke="#f0b13a" stroke-width="2.2"/></g><path d="M1135.5 732.1 l4.5 3.2 -4.5 3.2z" fill="#8a8a8a"/><g transform="translate(1151.3,727.8) scale(0.9375)"><circle cx="7.3" cy="7.3" r="5" fill="none" stroke="#8cc63f" stroke-width="3.4"/><path d="M8.5 8.5 L15 15" stroke="#589632" stroke-width="3.4"/><path d="M7 7 L10.2 10.2" stroke="#f0b13a" stroke-width="2.2"/></g></svg></div>
<div class="b" style="left:1354.2px;top:544.5px;width:10px;height:192px;background:#585858;"></div>
<div class="b" style="left:1354.2px;top:545.2px;width:10px;height:61.8px;background:#363636;border:1px solid #555;"></div>
<!-- statusbar -->
<div class="b" style="left:0px;top:737px;width:1365px;height:30px;background:#323232;"></div>
<div class="b" style="left:4px;top:742.5px;width:200px;height:21px;background:#1e1e1e;border:1px solid #5a5a5a;"></div>
<svg style="left:12px;top:746px" width="14" height="14" viewBox="0 0 14 14"><circle cx="5.6" cy="5.6" r="4" fill="none" stroke="#b5b5b5" stroke-width="1.4"/><path d="M8.6 8.6 L12.6 12.6" stroke="#b5b5b5" stroke-width="1.6"/></svg>
<span id="t46" class="t " style="left:34.1px;top:745.5px;font-size:11.16px;line-height:16px;color:#7f7f7f;">Type to locate (Ctrl+K)</span>
<span id="t47" class="t " style="left:525.1px;top:745.5px;font-size:10.55px;line-height:16px;color:#cfcfcf;">Coordinate</span>
<div class="b" style="left:582px;top:742px;width:139.5px;height:21.5px;background:#1e1e1e;border:1px solid #5a5a5a;"></div>
<span id="t48" class="t " style="left:588.7px;top:745.5px;font-size:11.28px;line-height:16px;color:#f0f0f0;">-26.131893°, 28.237973°</span>
<svg style="left:727px;top:745px" width="16" height="16" viewBox="0 0 16 16"><g fill="none" stroke="#d8d8d8" stroke-width="1.2"><path d="M2 2 L13 13 M5 1 L9 6 M1 5 L6 9"/><circle cx="10" cy="10" r="3.2" fill="#323232"/><circle cx="10" cy="10" r="1" fill="#d8d8d8"/></g></svg>
<span id="t49" class="t " style="left:756.3px;top:745.5px;font-size:10.5px;line-height:16px;color:#cfcfcf;letter-spacing:-0.315px;">Scale</span>
<div class="b" style="left:786px;top:742px;width:78px;height:21.5px;background:#1e1e1e;border:1px solid #5a5a5a;"></div>
<span id="t50" class="t " style="left:791.7px;top:745.5px;font-size:10.91px;line-height:16px;color:#f0f0f0;">1:795</span>
<div class="b" style="left:846.5px;top:743px;width:16.5px;height:19.5px;background:#454545;"></div>
<svg style="left:850px;top:750px" width="8" height="6" viewBox="0 0 8 6"><path d="M1.2 0.8 H6.8 L4 5Z" fill="#c8c8c8"/></svg>
<svg style="left:875px;top:744px" width="14" height="17" viewBox="0 0 14 17"><path d="M3.2 8 V5 Q3.2 1.5 7 1.5 Q10.8 1.5 10.8 5 V8" fill="none" stroke="#9a9a9a" stroke-width="1.8"/><rect x="1" y="7.5" width="12" height="8.5" rx="1.2" fill="#9a9a9a"/></svg>
<span id="t51" class="t " style="left:898.8px;top:745.5px;font-size:10.5px;line-height:16px;color:#cfcfcf;letter-spacing:-0.110px;">Magnifier</span>
<div class="b" style="left:946.5px;top:742px;width:82px;height:21.5px;background:#1e1e1e;border:1px solid #5a5a5a;"></div>
<span id="t52" class="t " style="left:950.8px;top:745.5px;font-size:10.71px;line-height:16px;color:#f0f0f0;">100%</span>
<div class="b" style="left:1011.5px;top:743px;width:16px;height:19.5px;background:#4a4a4a;"></div><svg style="left:1011.5px;top:743px" width="16" height="19.5" viewBox="0 0 14 18"><path d="M4.6 7.2 L7 3.6 L9.4 7.2Z M4.6 10.8 L7 14.4 L9.4 10.8Z" fill="#b0b0b0"/></svg>
<span id="t53" class="t " style="left:1037.8px;top:745.5px;font-size:11.06px;line-height:16px;color:#cfcfcf;">Rotation</span>
<div class="b" style="left:1090px;top:742px;width:82px;height:21.5px;background:#1e1e1e;border:1px solid #5a5a5a;"></div>
<span id="t54" class="t " style="left:1095.9px;top:745.5px;font-size:11.65px;line-height:16px;color:#f0f0f0;">0.0 °</span>
<div class="b" style="left:1155px;top:743px;width:16px;height:19.5px;background:#4a4a4a;"></div><svg style="left:1155px;top:743px" width="16" height="19.5" viewBox="0 0 14 18"><path d="M4.6 7.2 L7 3.6 L9.4 7.2Z M4.6 10.8 L7 14.4 L9.4 10.8Z" fill="#b0b0b0"/></svg>
<div class="b" style="left:1178.5px;top:744px;width:17.5px;height:17.5px;background:#0d6b05;border:1px solid #7a7a7a;"></div>
<svg style="left:1180px;top:745.5px" width="15" height="15" viewBox="0 0 15 15"><path d="M2.5 8 L6 11.5 L12.5 3" fill="none" stroke="#fff" stroke-width="2"/></svg>
<span id="t55" class="t " style="left:1201.3px;top:745.5px;font-size:10.61px;line-height:16px;color:#cfcfcf;">Render</span>
<svg style="left:1250px;top:746px" width="14" height="14" viewBox="0 0 14 14"><g fill="none" stroke="#d0d0d0" stroke-width="1"><circle cx="7" cy="7" r="6"/><ellipse cx="7" cy="7" rx="2.8" ry="6"/><path d="M1 7 H13 M2 4 H12 M2 10 H12"/></g></svg>
<span id="t56" class="t " style="left:1266px;top:745.5px;font-size:10.5px;line-height:16px;color:#cfcfcf;letter-spacing:-0.273px;">EPSG:4326</span>
<svg style="left:1342px;top:746px" width="16" height="15" viewBox="0 0 16 15"><path d="M8 1 Q15 1 15 6 Q15 11 8 11 Q7 11 6 10.8 L2.5 13.5 L3.5 9.8 Q1 8.5 1 6 Q1 1 8 1Z" fill="#cfcfcf"/><g fill="#323232"><circle cx="4.8" cy="6" r="1"/><circle cx="8" cy="6" r="1"/><circle cx="11.2" cy="6" r="1"/></g></svg>
<!-- menu -->
<div class="b" style="left:6px;top:44px;width:245px;height:475px;background:#323232;border:1px solid #3d3d3d;box-shadow:0 2px 3px rgba(0,0,0,.45);"></div>
<div class="b" style="left:11px;top:319px;width:234px;height:22px;background:#0d6b05;"></div>
<span id="t57" class="t " style="left:39px;top:52.6px;font-size:11.99px;line-height:16px;color:#d6d6d6;"><u>N</u>ew</span>
<span id="t58" class="t " style="left:154px;top:52.6px;font-size:12.5px;line-height:16px;color:#d6d6d6;letter-spacing:0.036px;">Ctrl+N</span>
<span id="t59" class="t " style="left:39px;top:76px;font-size:12.5px;line-height:16px;color:#d6d6d6;letter-spacing:-0.144px;">New from Template</span>
<svg style="left:236px;top:80px" width="6" height="8" viewBox="0 0 6 8"><path d="M1 0.5 L5 4 L1 7.5Z" fill="#9a9a9a"/></svg>
<div class="b" style="left:21px;top:96.5px;width:220px;height:1px;background:#5a5a5a;"></div>
<span id="t60" class="t " style="left:39px;top:102.6px;font-size:11.88px;line-height:16px;color:#d6d6d6;letter-spacing:-0.209px;"><u>O</u>pen...</span>
<span id="t61" class="t " style="left:154px;top:102.6px;font-size:12.5px;line-height:16px;color:#d6d6d6;letter-spacing:-0.078px;">Ctrl+O</span>
<span id="t62" class="t " style="left:39px;top:126px;font-size:11.88px;line-height:16px;color:#d6d6d6;letter-spacing:-0.062px;">Open From</span>
<svg style="left:236px;top:130px" width="6" height="8" viewBox="0 0 6 8"><path d="M1 0.5 L5 4 L1 7.5Z" fill="#9a9a9a"/></svg>
<span id="t63" class="t " style="left:39px;top:149px;font-size:11.88px;line-height:16px;color:#d6d6d6;letter-spacing:-0.182px;">Open <u>R</u>ecent</span>
<svg style="left:236px;top:153px" width="6" height="8" viewBox="0 0 6 8"><path d="M1 0.5 L5 4 L1 7.5Z" fill="#9a9a9a"/></svg>
<div class="b" style="left:21px;top:169.5px;width:220px;height:1px;background:#5a5a5a;"></div>
<span id="t64" class="t " style="left:39px;top:175px;font-size:11.88px;line-height:16px;color:#d6d6d6;letter-spacing:-0.274px;">Close</span>
<div class="b" style="left:21px;top:195.5px;width:220px;height:1px;background:#5a5a5a;"></div>
<span id="t65" class="t " style="left:39px;top:202px;font-size:11.88px;line-height:16px;color:#d6d6d6;letter-spacing:-0.769px;"><u>S</u>ave</span>
<span id="t66" class="t " style="left:154px;top:202px;font-size:11.88px;line-height:16px;color:#d6d6d6;letter-spacing:-0.054px;">Ctrl+S</span>
<span id="t67" class="t " style="left:39px;top:226px;font-size:11.88px;line-height:16px;color:#d6d6d6;letter-spacing:-0.498px;">Save <u>A</u>s...</span>
<span id="t68" class="t " style="left:154px;top:226px;font-size:12.5px;line-height:16px;color:#d6d6d6;letter-spacing:-0.158px;">Ctrl+Shift+S</span>
<span id="t69" class="t " style="left:39px;top:249px;font-size:11.88px;line-height:16px;color:#d6d6d6;letter-spacing:-0.386px;">Save To</span>
<svg style="left:236px;top:253px" width="6" height="8" viewBox="0 0 6 8"><path d="M1 0.5 L5 4 L1 7.5Z" fill="#9a9a9a"/></svg>
<span id="t70" class="t " style="left:39px;top:272px;font-size:11.88px;line-height:16px;color:#d6d6d6;letter-spacing:-0.376px;">Revert...</span>
<div class="b" style="left:21px;top:292.5px;width:220px;height:1px;background:#5a5a5a;"></div>
<span id="t71" class="t " style="left:39px;top:298.6px;font-size:11.88px;line-height:16px;color:#d6d6d6;letter-spacing:-0.195px;"><u>P</u>roperties...</span>
<span id="t72" class="t " style="left:154px;top:298.6px;font-size:12.5px;line-height:16px;color:#d6d6d6;letter-spacing:-0.158px;">Ctrl+Shift+P</span>
<span id="t73" class="t " style="left:39px;top:322px;font-size:11.88px;line-height:16px;color:#e6e6e6;letter-spacing:-0.043px;"><u>S</u>napping Options...</span>
<span id="t74" class="t " style="left:39px;top:345px;font-size:12.5px;line-height:16px;color:#d6d6d6;letter-spacing:-0.079px;">Import/Export</span>
<svg style="left:236px;top:349px" width="6" height="8" viewBox="0 0 6 8"><path d="M1 0.5 L5 4 L1 7.5Z" fill="#9a9a9a"/></svg>
<div class="b" style="left:21px;top:365.5px;width:220px;height:1px;background:#5a5a5a;"></div>
<span id="t75" class="t " style="left:39px;top:372px;font-size:11.88px;line-height:16px;color:#d6d6d6;letter-spacing:-0.044px;">New <u>P</u>rint Layout...</span>
<span id="t76" class="t " style="left:154px;top:372px;font-size:12.5px;line-height:16px;color:#d6d6d6;letter-spacing:-0.263px;">Ctrl+P</span>
<span id="t77" class="t " style="left:39px;top:396px;font-size:11.88px;line-height:16px;color:#d6d6d6;letter-spacing:-0.163px;">New <u>R</u>eport...</span>
<span id="t78" class="t " style="left:39px;top:420px;font-size:11.88px;line-height:16px;color:#d6d6d6;letter-spacing:-0.034px;">Layout Manager...</span>
<span id="t79" class="t " style="left:39px;top:443px;font-size:11.88px;line-height:16px;color:#d6d6d6;letter-spacing:-0.085px;">Layouts</span>
<svg style="left:236px;top:447px" width="6" height="8" viewBox="0 0 6 8"><path d="M1 0.5 L5 4 L1 7.5Z" fill="#9a9a9a"/></svg>
<div class="b" style="left:21px;top:463.5px;width:220px;height:1px;background:#5a5a5a;"></div>
<span id="t80" class="t " style="left:39px;top:469px;font-size:12.5px;line-height:16px;color:#d6d6d6;letter-spacing:-0.216px;">Models</span>
<svg style="left:236px;top:473px" width="6" height="8" viewBox="0 0 6 8"><path d="M1 0.5 L5 4 L1 7.5Z" fill="#9a9a9a"/></svg>
<div class="b" style="left:21px;top:489.5px;width:220px;height:1px;background:#5a5a5a;"></div>
<span id="t81" class="t " style="left:39px;top:495px;font-size:11.88px;line-height:16px;color:#d6d6d6;letter-spacing:-0.644px;">Exit QGIS</span>
<span id="t82" class="t " style="left:154px;top:495px;font-size:12.5px;line-height:16px;color:#d6d6d6;letter-spacing:-0.078px;">Ctrl+Q</span>
<svg style="left:0;top:0" width="40" height="520" viewBox="0 0 40 520"><g transform="translate(17,52)"><path d="M0 0 H7 L10.5 3.5 V14 H0Z" fill="#fbfbfb"/><path d="M7 0 V3.5 H10.5Z" fill="#c8c8c8"/></g><g transform="translate(14,103)"><path d="M0.5 1 H5.5 L7 2.8 H13.5 V5 H0.5Z" fill="#e3b922"/><path d="M0.5 12.5 L2.4 4.6 H15.5 L13.6 12.5Z" fill="#fddc4c"/><path d="M0.5 3 V12.5 L2.4 4.6" fill="#e9c32d"/></g><g transform="translate(15.5,202)"><rect x="0" y="0" width="13" height="13.5" rx="1.2" fill="#5c87c4"/><rect x="2.3" y="0.8" width="8.4" height="5.2" fill="#d4d8de"/><rect x="2.3" y="2.2" width="8.4" height="2" fill="#b4b8be"/><rect x="2.6" y="8.3" width="7.8" height="4.2" fill="#f4f4f4"/><rect x="3.8" y="9.2" width="2.4" height="2.6" fill="#33537f"/></g><g transform="translate(15.5,226.5)"><rect x="0" y="0" width="13" height="13.5" rx="1.2" fill="#5c87c4"/><rect x="2.3" y="0.8" width="8.4" height="5.2" fill="#d4d8de"/><rect x="2.3" y="2.2" width="8.4" height="2" fill="#b4b8be"/><rect x="2.6" y="8.3" width="7.8" height="4.2" fill="#f4f4f4"/><rect x="3.8" y="9.2" width="2.4" height="2.6" fill="#33537f"/><rect x="8.4" y="9.3" width="6" height="5.6" rx="1" fill="#4f9a3c"/><path d="M10 13.6 L13 10.6" stroke="#fff" stroke-width="1.1"/></g><g transform="translate(14.5,298)"><rect x="0" y="0" width="11.5" height="15" fill="#f4f4f4"/><path d="M3 12.5 L4 9 L10.5 1.5 L12.6 3.4 L6.2 11Z" fill="#e9c63a" stroke="#6b5a1a" stroke-width=".6"/><path d="M3 12.5 L4 9.3 L6 11Z" fill="#3a3a3a"/></g><g transform="translate(15.2,372.3)"><path d="M0 0 H9.5 L13 3.5 V13.5 H0Z" fill="#eef0f6"/><path d="M9.5 0 V3.5 H13Z" fill="#b9bcc4"/><path d="M0 0 H8 V3.2 H3.2 V13.5 H0Z" fill="#e8c52e"/><path d="M1 5 h1.4 M1 7.5 h1.4 M1 10 h1.4 M4.5 1 v1.4 M6.5 1 v1.4" stroke="#a8860f" stroke-width=".7"/><rect x="7.4" y="7.2" width="7" height="7" rx="1.2" fill="#d4a514"/><path d="M10.9 8.3 V13.1 M8.8 9.5 L13 11.9 M13 9.5 L8.8 11.9" stroke="#fff" stroke-width=".9"/></g><g transform="translate(15.2,396.3)"><path d="M0 0 H9.5 L13 3.5 V13.5 H0Z" fill="#eef0f6"/><path d="M9.5 0 V3.5 H13Z" fill="#b9bcc4"/><rect x="2" y="3.5" width="8.5" height="8" fill="#dfe3f0"/><path d="M2.5 5 H10" stroke="#7b8fc0" stroke-width=".8"/><path d="M4.5 10.5 V8 M6.3 10.5 V6.8" stroke="#4f7fd0" stroke-width="1.1"/><path d="M8.1 10.5 V6 M9.7 10.5 V7.5" stroke="#d0403a" stroke-width="1.1"/><rect x="7.4" y="7.2" width="7" height="7" rx="1.2" fill="#d4a514"/><path d="M10.9 8.3 V13.1 M8.8 9.5 L13 11.9 M13 9.5 L8.8 11.9" stroke="#fff" stroke-width=".9"/></g><g transform="translate(15.2,420.8)"><path d="M0 0 H9.5 L13 3.5 V13.5 H0Z" fill="#eef0f6"/><path d="M9.5 0 V3.5 H13Z" fill="#b9bcc4"/><circle cx="5.8" cy="4.6" r="2.6" fill="#9a9a9a"/><circle cx="5" cy="3.6" r="1.4" fill="#eef0f6"/><path d="M6.8 6 L9.5 9.5" stroke="#9a9a9a" stroke-width="2"/><path d="M9 9 L13.2 14.2" stroke="#e6c14a" stroke-width="2.3" stroke-linecap="round"/></g></svg>
</body></html>
